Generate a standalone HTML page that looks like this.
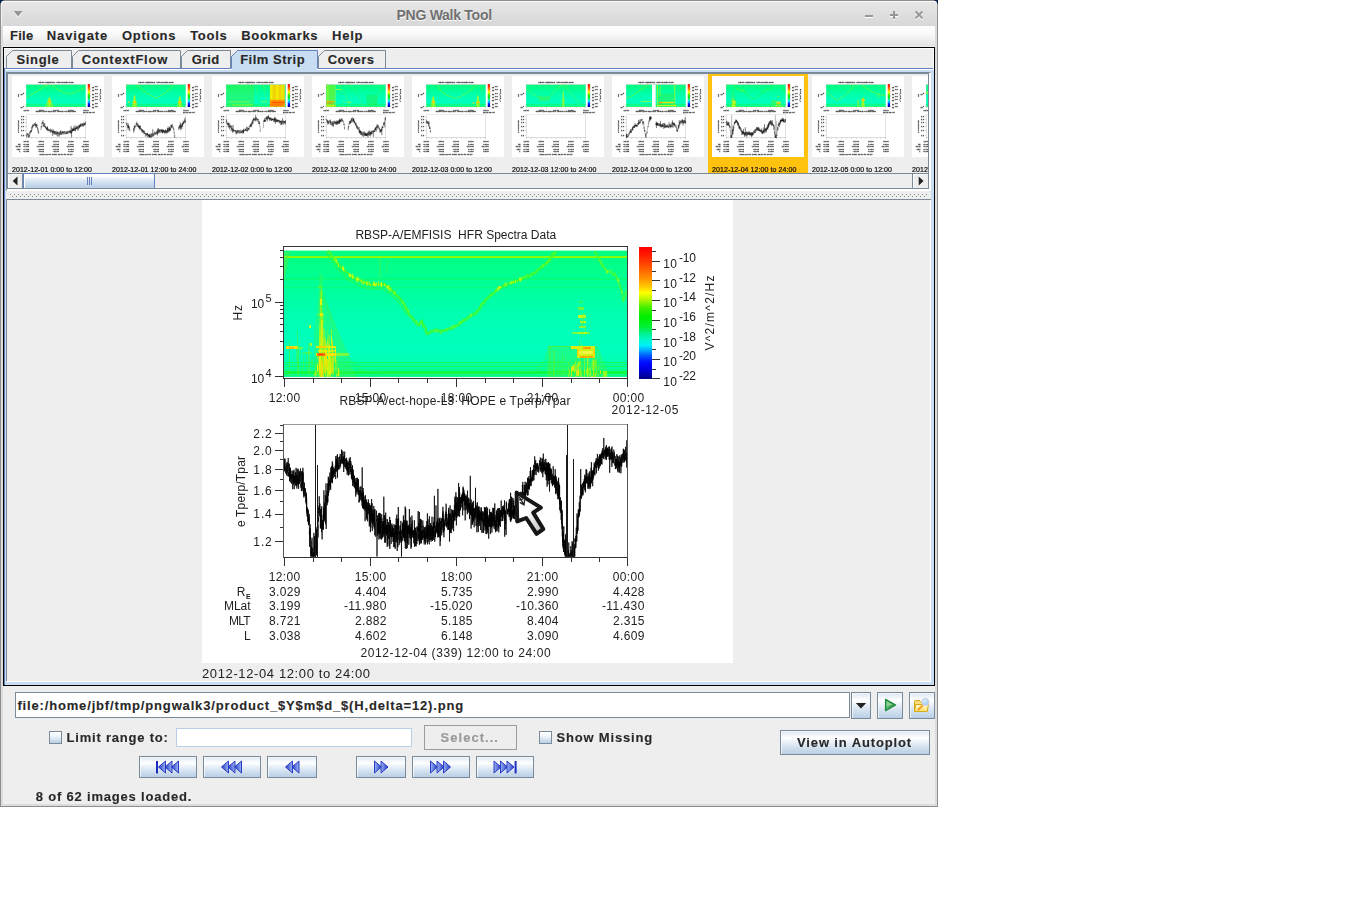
<!DOCTYPE html>
<html><head><meta charset="utf-8"><title>PNG Walk Tool</title>
<style>
html,body{margin:0;padding:0;background:#fff;}
body{width:1345px;height:916px;position:relative;overflow:hidden;font-family:"Liberation Sans",sans-serif;}
.a{position:absolute;box-sizing:border-box;}
.t{position:absolute;white-space:pre;line-height:20px;height:20px;font-family:"Liberation Sans",sans-serif;}
svg{position:absolute;overflow:visible;}
svg text{font-family:"Liberation Sans",sans-serif;}

</style></head><body>
<div class="a" style="left:0px;top:0px;width:938px;height:807px;background:#eeeeee;"></div>
<div class="a" style="left:0px;top:0px;width:938px;height:807px;border:1px solid #8e8e8e;"></div>
<div class="a" style="left:1px;top:1px;width:936px;height:805px;border:2px solid #dcdcdc;border-top:none;"></div>
<div class="a" style="left:1px;top:1px;width:936px;height:1px;background:#fbfbfb;"></div>
<div class="a" style="left:1px;top:2px;width:936px;height:24px;background:linear-gradient(#e7e7e7,#d7d7d7);"></div>
<div class="a" style="left:1px;top:3px;width:1px;height:23px;background:#f2f2f2;"></div>
<span class="t" style="left:396.50px;top:5.15px;font-size:14px;color:#707070;font-weight:bold;-webkit-text-stroke:0.12px #707070;letter-spacing:-0.268px;text-shadow:0 1px 0 #fff;-webkit-text-stroke:0;">PNG Walk Tool</span>
<svg style="left:0;top:0" width="938" height="26" viewBox="0 0 938 26">
<g fill="#fff"><rect x="865" y="16" width="8" height="2"/><rect x="890" y="15" width="8" height="2"/><rect x="893" y="12" width="2" height="8"/>
<path d="M914.80 13.05 L916.15 11.70 L919.00 14.55 L921.85 11.70 L923.20 13.05 L920.35 15.90 L923.20 18.75 L921.85 20.10 L919.00 17.25 L916.15 20.10 L914.80 18.75 L917.65 15.90 Z"/>
<path d="M13.6 12 L22.6 12 L18.1 17.4 Z"/></g>
<g fill="#969696"><rect x="865" y="15" width="8" height="2"/><rect x="890" y="14" width="8" height="2"/><rect x="893" y="11" width="2" height="8"/>
<path d="M914.80 12.05 L916.15 10.70 L919.00 13.55 L921.85 10.70 L923.20 12.05 L920.35 14.90 L923.20 17.75 L921.85 19.10 L919.00 16.25 L916.15 19.10 L914.80 17.75 L917.65 14.90 Z"/>
<path d="M13.6 11 L22.6 11 L18.1 16.4 Z"/></g>
<path d="M0 0 H4.4 Q1 1 0 4.4 Z M938 0 H933.6 Q937 1 938 4.4 Z" fill="#04244a"/>
</svg>
<div class="a" style="left:3px;top:26px;width:932px;height:20px;background:linear-gradient(#ffffff 0%,#f7f7f7 45%,#e3e3e3 100%);"></div>
<div class="a" style="left:3px;top:46px;width:932px;height:1px;background:#eeeeee;"></div>
<span class="t" style="left:10.00px;top:25.50px;font-size:13px;color:#282828;font-weight:bold;-webkit-text-stroke:0.12px #282828;letter-spacing:0.251px;">File</span>
<span class="t" style="left:46.80px;top:25.50px;font-size:13px;color:#282828;font-weight:bold;-webkit-text-stroke:0.12px #282828;letter-spacing:0.889px;">Navigate</span>
<span class="t" style="left:122.00px;top:25.50px;font-size:13px;color:#282828;font-weight:bold;-webkit-text-stroke:0.12px #282828;letter-spacing:0.728px;">Options</span>
<span class="t" style="left:190.20px;top:25.50px;font-size:13px;color:#282828;font-weight:bold;-webkit-text-stroke:0.12px #282828;letter-spacing:0.700px;">Tools</span>
<span class="t" style="left:241.30px;top:25.50px;font-size:13px;color:#282828;font-weight:bold;-webkit-text-stroke:0.12px #282828;letter-spacing:0.677px;">Bookmarks</span>
<span class="t" style="left:332.10px;top:25.50px;font-size:13px;color:#282828;font-weight:bold;-webkit-text-stroke:0.12px #282828;letter-spacing:0.732px;">Help</span>
<div class="a" style="left:3px;top:47px;width:932px;height:639px;border:1px solid #000;background:#eeeeee;"></div>
<div class="a" style="left:4px;top:48px;width:930px;height:1px;background:#fff;"></div>
<div class="a" style="left:933px;top:48px;width:1px;height:20px;background:#fff;"></div>
<div class="a" style="left:4px;top:68px;width:929px;height:1px;background:#6382bf;"></div>
<div class="a" style="left:4px;top:69px;width:1px;height:616px;background:#6382bf;"></div>
<div class="a" style="left:5px;top:69px;width:928px;height:1px;background:#fff;"></div>
<div class="a" style="left:5px;top:70px;width:929px;height:2px;background:#c8ddf2;"></div>
<div class="a" style="left:5px;top:70px;width:1px;height:615px;background:#c8ddf2;"></div>
<div class="a" style="left:931px;top:70px;width:3px;height:615px;background:#c8ddf2;"></div>
<div class="a" style="left:5px;top:682px;width:929px;height:3px;background:#c8ddf2;"></div>
<svg style="left:0;top:0" width="938" height="80" viewBox="0 0 938 80" shape-rendering="crispEdges"><path d="M6.5 68 L6.5 56.5 L12.5 50.5 L71.5 50.5 L71.5 68" fill="none" stroke="#7a8a99" shape-rendering="auto"/><path d="M72.5 68 L72.5 56.5 L78.5 50.5 L180.5 50.5 L180.5 68" fill="none" stroke="#7a8a99" shape-rendering="auto"/><path d="M181.5 68 L181.5 56.5 L187.5 50.5 L230.5 50.5 L230.5 68" fill="none" stroke="#7a8a99" shape-rendering="auto"/><path d="M231 69 L231 56 L237 50 L318 50 L318 69 Z" fill="#c8ddf2"/><path d="M231.5 68.5 L231.5 56.5 L237.5 50.5 L317.5 50.5 L317.5 68.5" fill="none" stroke="#6382bf" shape-rendering="auto"/><path d="M318.5 68 L318.5 56.5 L324.5 50.5 L385.5 50.5 L385.5 68" fill="none" stroke="#7a8a99" shape-rendering="auto"/></svg>
<div class="a" style="left:232px;top:68px;width:85px;height:2px;background:#c8ddf2;"></div>
<span class="t" style="left:16.40px;top:49.50px;font-size:13px;color:#282828;font-weight:bold;-webkit-text-stroke:0.12px #282828;letter-spacing:0.682px;">Single</span>
<span class="t" style="left:81.80px;top:49.50px;font-size:13px;color:#282828;font-weight:bold;-webkit-text-stroke:0.12px #282828;letter-spacing:0.746px;">ContextFlow</span>
<span class="t" style="left:191.80px;top:49.50px;font-size:13px;color:#282828;font-weight:bold;-webkit-text-stroke:0.12px #282828;letter-spacing:0.194px;">Grid</span>
<span class="t" style="left:240.20px;top:49.50px;font-size:13px;color:#282828;font-weight:bold;-webkit-text-stroke:0.12px #282828;letter-spacing:0.495px;">Film Strip</span>
<span class="t" style="left:327.70px;top:49.50px;font-size:13px;color:#282828;font-weight:bold;-webkit-text-stroke:0.12px #282828;letter-spacing:0.420px;">Covers</span>
<div class="a" style="left:6px;top:72px;width:925px;height:119px;border-top:1px solid #7a8a99;border-left:1px solid #7a8a99;border-right:1px solid #fff;border-bottom:1px solid #fff;"></div>
<div class="a" style="left:7px;top:73px;width:923px;height:117px;border-right:1px solid #fff;border-bottom:1px solid #fff;"></div>
<div class="a" style="left:7px;top:73px;width:922px;height:116px;border:1px solid #7a8a99;background:#eeeeee;"></div>
<div class="a" style="left:8px;top:74px;width:920px;height:99px;overflow:hidden;background:#eeeeee;will-change:transform;"><div class="a" style="left:4px;top:2px;width:92px;height:81px;background:#fff;"></div><span class="t" style="left:4px;top:86.17px;font-size:7px;color:#111;-webkit-text-stroke:.22px #111;letter-spacing:0.057px;">2012-12-01 0:00 to 12:00</span><div class="a" style="left:104px;top:2px;width:92px;height:81px;background:#fff;"></div><span class="t" style="left:104px;top:86.17px;font-size:7px;color:#111;-webkit-text-stroke:.22px #111;letter-spacing:0.079px;">2012-12-01 12:00 to 24:00</span><div class="a" style="left:204px;top:2px;width:92px;height:81px;background:#fff;"></div><span class="t" style="left:204px;top:86.17px;font-size:7px;color:#111;-webkit-text-stroke:.22px #111;letter-spacing:0.057px;">2012-12-02 0:00 to 12:00</span><div class="a" style="left:304px;top:2px;width:92px;height:81px;background:#fff;"></div><span class="t" style="left:304px;top:86.17px;font-size:7px;color:#111;-webkit-text-stroke:.22px #111;letter-spacing:0.079px;">2012-12-02 12:00 to 24:00</span><div class="a" style="left:404px;top:2px;width:92px;height:81px;background:#fff;"></div><span class="t" style="left:404px;top:86.17px;font-size:7px;color:#111;-webkit-text-stroke:.22px #111;letter-spacing:0.057px;">2012-12-03 0:00 to 12:00</span><div class="a" style="left:504px;top:2px;width:92px;height:81px;background:#fff;"></div><span class="t" style="left:504px;top:86.17px;font-size:7px;color:#111;-webkit-text-stroke:.22px #111;letter-spacing:0.079px;">2012-12-03 12:00 to 24:00</span><div class="a" style="left:604px;top:2px;width:92px;height:81px;background:#fff;"></div><span class="t" style="left:604px;top:86.17px;font-size:7px;color:#111;-webkit-text-stroke:.22px #111;letter-spacing:0.057px;">2012-12-04 0:00 to 12:00</span><div class="a" style="left:700px;top:0;width:100px;height:99px;background:#ffc20e;"></div><div class="a" style="left:704px;top:2px;width:92px;height:81px;background:#fff;"></div><span class="t" style="left:704px;top:86.17px;font-size:7px;color:#111;-webkit-text-stroke:.22px #111;letter-spacing:0.079px;">2012-12-04 12:00 to 24:00</span><div class="a" style="left:804px;top:2px;width:92px;height:81px;background:#fff;"></div><span class="t" style="left:804px;top:86.17px;font-size:7px;color:#111;-webkit-text-stroke:.22px #111;letter-spacing:0.057px;">2012-12-05 0:00 to 12:00</span><div class="a" style="left:904px;top:2px;width:92px;height:81px;background:#fff;"></div><span class="t" style="left:904px;top:86.17px;font-size:7px;color:#111;-webkit-text-stroke:.22px #111;letter-spacing:0.079px;">2012-12-05 12:00 to 24:00</span></div>
<div class="a" style="left:8px;top:173px;width:920px;height:16px;background:#eeeeee;"></div>
<div class="a" style="left:8px;top:173px;width:920px;height:1px;background:#7a8a99;"></div>
<div class="a" style="left:8px;top:188px;width:920px;height:1px;background:#7a8a99;"></div>
<div class="a" style="left:8px;top:174px;width:15px;height:14px;border-top:1px solid #fff;border-left:1px solid #fff;"></div>
<div class="a" style="left:22px;top:174px;width:1px;height:14px;background:#7a8a99;"></div>
<div class="a" style="left:23px;top:173px;width:132px;height:16px;border:1px solid #6382bf;border-bottom-color:#7a8a99;background:linear-gradient(#ffffff 0%,#ffffff 15%,#dde8f3 45%,#c4d8ed 80%,#b8cfe5 100%);"></div>
<div class="a" style="left:24px;top:174px;width:130px;height:1px;background:#fff;"></div>
<div class="a" style="left:24px;top:174px;width:1px;height:14px;background:#fff;"></div>
<div class="a" style="left:87px;top:177px;width:1px;height:8px;background:#6382bf;"></div>
<div class="a" style="left:89px;top:177px;width:1px;height:8px;background:#6382bf;"></div>
<div class="a" style="left:91px;top:177px;width:1px;height:8px;background:#6382bf;"></div>
<div class="a" style="left:912px;top:174px;width:1px;height:14px;background:#7a8a99;"></div>
<div class="a" style="left:913px;top:174px;width:15px;height:14px;border-top:1px solid #fff;border-left:1px solid #fff;"></div>
<svg style="left:0;top:170px" width="938" height="20" viewBox="0 170 938 20"><path d="M17.5 176.5 L17.5 185.5 L12.7 181 Z M918.7 176.5 L918.7 185.5 L923.5 181 Z" fill="#222"/></svg>
<svg style="left:8px;top:193px" width="920" height="5" viewBox="8 193 920 5" shape-rendering="crispEdges"><defs><pattern id="dp" x="0" y="194" width="4" height="4" patternUnits="userSpaceOnUse"><rect x="2" y="0" width="1" height="1" fill="#7d8c9b"/><rect x="0" y="2" width="1" height="1" fill="#7d8c9b"/></pattern></defs><rect x="10" y="194" width="917" height="4" fill="url(#dp)"/></svg>
<div class="a" style="left:6px;top:199px;width:925px;height:1px;background:#7a8a99;"></div>
<div class="a" style="left:6px;top:199px;width:1px;height:482px;background:#7a8a99;"></div>
<div class="a" style="left:7px;top:681px;width:924px;height:1px;background:#fff;"></div>
<div class="a" style="left:930px;top:200px;width:1px;height:482px;background:#fff;"></div>
<svg style="left:0;top:0;will-change:transform" width="1345" height="916" viewBox="0 0 1345 916">
<defs>
<linearGradient id="cb" x1="0" y1="0" x2="0" y2="1">
<stop offset="0" stop-color="#ff0000"/>
<stop offset="0.04" stop-color="#ff1000"/>
<stop offset="0.11" stop-color="#ff3800"/>
<stop offset="0.235" stop-color="#ff9000"/>
<stop offset="0.3" stop-color="#ffc800"/>
<stop offset="0.346" stop-color="#ffff00"/>
<stop offset="0.395" stop-color="#b8f800"/>
<stop offset="0.46" stop-color="#40f000"/>
<stop offset="0.53" stop-color="#00ee00"/>
<stop offset="0.6" stop-color="#00f030"/>
<stop offset="0.656" stop-color="#00f090"/>
<stop offset="0.7" stop-color="#00f8c8"/>
<stop offset="0.745" stop-color="#00f0f8"/>
<stop offset="0.78" stop-color="#00b0ff"/>
<stop offset="0.82" stop-color="#0060ff"/>
<stop offset="0.87" stop-color="#0010ff"/>
<stop offset="0.917" stop-color="#0000e8"/>
<stop offset="1" stop-color="#000088"/>
</linearGradient>
<linearGradient id="sgb" x1="0" y1="0" x2="0" y2="1">
<stop offset="0" stop-color="#02ff80"/>
<stop offset="0.22" stop-color="#00ff92"/>
<stop offset="0.34" stop-color="#00ffa0"/>
<stop offset="0.46" stop-color="#00ffac"/>
<stop offset="0.6" stop-color="#00ffb6"/>
<stop offset="0.8" stop-color="#00ffbe"/>
<stop offset="0.87" stop-color="#00ffb0"/>
<stop offset="1" stop-color="#08fc98"/>
</linearGradient>
<clipPath id="sgclip"><rect x="284" y="250.6" width="343" height="126.4"/></clipPath>
<linearGradient id="curg" x1="0" y1="0" x2="1" y2="1"><stop offset="0" stop-color="#fff"/><stop offset="0.45" stop-color="#fdfdfd"/><stop offset="1" stop-color="#b8b8b8"/></linearGradient>
<g id="pf">
<rect x="202" y="200" width="531" height="463" fill="#fff" stroke="none"/>
<rect x="639" y="247" width="13" height="132" fill="url(#cb)" stroke="none"/>
<g stroke="#333" stroke-width="1" fill="none" shape-rendering="crispEdges">
<path d="M275 376.5 H284M280 354.5 H284M280 341.5 H284M280 331.5 H284M280 324.5 H284M280 318.5 H284M280 313.5 H284M280 309.5 H284M280 305.5 H284M275 302.5 H284M280 279.5 H284M280 266.5 H284M280 257.5 H284M280 250.5 H284M284.5 378 V387M313.5 378 V383M341.5 378 V383M370.5 378 V387M398.5 378 V383M427.5 378 V383M456.5 378 V387M485.5 378 V383M513.5 378 V383M542.5 378 V387M571.5 378 V383M599.5 378 V383M627.5 378 V387M284.5 557 V566M313.5 557 V562M341.5 557 V562M370.5 557 V566M398.5 557 V562M427.5 557 V562M456.5 557 V566M485.5 557 V562M513.5 557 V562M542.5 557 V566M571.5 557 V562M599.5 557 V562M627.5 557 V566M652 261.5 H660M652 251.5 H656M652 280.5 H660M652 271.5 H656M652 300.5 H660M652 290.5 H656M652 320.5 H660M652 310.5 H656M652 339.5 H660M652 329.5 H656M652 359.5 H660M652 349.5 H656M652 378.5 H660M652 369.5 H656M275 541.5 H284M280 527.5 H284M275 514.5 H284M280 501.5 H284M275 490.5 H284M280 479.5 H284M275 469.5 H284M280 459.5 H284M275 450.5 H284M280 441.5 H284M275 433.5 H284M280 425.5 H284"/>
</g>
<g id="axl" stroke-width="1" fill="none" shape-rendering="crispEdges">
<path d="M283 246.5H628M283 378.5H628M283 557.5H628" stroke="#333"/>
<path d="M283.5 246V379M627.5 246V379" stroke="#333" opacity=".75"/>
<path d="M283.5 424V558M627.5 424V558" stroke="#555"/>
<path d="M284 424.5H627" stroke="#999"/>
</g>
<g font-size="12" fill="#222">
<text x="355.4" y="238.5" textLength="200.8" lengthAdjust="spacing" xml:space="preserve">RBSP-A/EMFISIS  HFR Spectra Data</text>
<text x="339.4" y="405" textLength="231" lengthAdjust="spacing" xml:space="preserve">RBSP-A/ect-hope-L3  HOPE e Tperp/Tpar</text>
<text x="268.7" y="401.5" textLength="31.5" lengthAdjust="spacing">12:00</text>
<text x="268.7" y="580.7" textLength="31.5" lengthAdjust="spacing">12:00</text>
<text x="354.7" y="401.5" textLength="31.5" lengthAdjust="spacing">15:00</text>
<text x="354.7" y="580.7" textLength="31.5" lengthAdjust="spacing">15:00</text>
<text x="440.7" y="401.5" textLength="31.5" lengthAdjust="spacing">18:00</text>
<text x="440.7" y="580.7" textLength="31.5" lengthAdjust="spacing">18:00</text>
<text x="526.7" y="401.5" textLength="31.5" lengthAdjust="spacing">21:00</text>
<text x="526.7" y="580.7" textLength="31.5" lengthAdjust="spacing">21:00</text>
<text x="612.7" y="401.5" textLength="31.5" lengthAdjust="spacing">00:00</text>
<text x="612.7" y="580.7" textLength="31.5" lengthAdjust="spacing">00:00</text>
<text x="611.5" y="413.5" textLength="67" lengthAdjust="spacing">2012-12-05</text>
<text x="251" y="307.5" textLength="13.2" lengthAdjust="spacing">10</text>
<text x="265.5" y="301.5" textLength="6.6" lengthAdjust="spacing" font-size="11">5</text>
<text x="251" y="382.5" textLength="13.2" lengthAdjust="spacing">10</text>
<text x="265.5" y="376.5" textLength="6.6" lengthAdjust="spacing" font-size="11">4</text>
<text x="663.3" y="268.3" textLength="13.6" lengthAdjust="spacing">10</text>
<text x="678.9" y="262.3" textLength="17.1" lengthAdjust="spacing">-10</text>
<text x="663.3" y="287.88" textLength="13.6" lengthAdjust="spacing">10</text>
<text x="678.9" y="281.88" textLength="17.1" lengthAdjust="spacing">-12</text>
<text x="663.3" y="307.46" textLength="13.6" lengthAdjust="spacing">10</text>
<text x="678.9" y="301.46" textLength="17.1" lengthAdjust="spacing">-14</text>
<text x="663.3" y="327.04" textLength="13.6" lengthAdjust="spacing">10</text>
<text x="678.9" y="321.04" textLength="17.1" lengthAdjust="spacing">-16</text>
<text x="663.3" y="346.62" textLength="13.6" lengthAdjust="spacing">10</text>
<text x="678.9" y="340.62" textLength="17.1" lengthAdjust="spacing">-18</text>
<text x="663.3" y="366.2" textLength="13.6" lengthAdjust="spacing">10</text>
<text x="678.9" y="360.2" textLength="17.1" lengthAdjust="spacing">-20</text>
<text x="663.3" y="385.78" textLength="13.6" lengthAdjust="spacing">10</text>
<text x="678.9" y="379.78" textLength="17.1" lengthAdjust="spacing">-22</text>
<text transform="translate(714,350.5) rotate(-90)" textLength="75" lengthAdjust="spacing">V^2/m^2/Hz</text>
<text transform="translate(241.5,320.5) rotate(-90)" textLength="15.5" lengthAdjust="spacing">Hz</text>
<text transform="translate(245,527) rotate(-90)" textLength="71" lengthAdjust="spacing">e Tperp/Tpar</text>
<text x="253.3" y="545.8" textLength="18.5" lengthAdjust="spacing">1.2</text>
<text x="253.3" y="518.407" textLength="18.5" lengthAdjust="spacing">1.4</text>
<text x="253.3" y="494.679" textLength="18.5" lengthAdjust="spacing">1.6</text>
<text x="253.3" y="473.749" textLength="18.5" lengthAdjust="spacing">1.8</text>
<text x="253.3" y="455.026" textLength="18.5" lengthAdjust="spacing">2.0</text>
<text x="253.3" y="438.09" textLength="18.5" lengthAdjust="spacing">2.2</text>
<text x="268.9" y="595.6" textLength="31.5" lengthAdjust="spacing">3.029</text>
<text x="354.9" y="595.6" textLength="31.5" lengthAdjust="spacing">4.404</text>
<text x="440.9" y="595.6" textLength="31.5" lengthAdjust="spacing">5.735</text>
<text x="526.9" y="595.6" textLength="31.5" lengthAdjust="spacing">2.990</text>
<text x="612.9" y="595.6" textLength="31.5" lengthAdjust="spacing">4.428</text>
<text x="268.9" y="610" textLength="31.5" lengthAdjust="spacing">3.199</text>
<text x="343.9" y="610" textLength="42.5" lengthAdjust="spacing">-11.980</text>
<text x="429.9" y="610" textLength="42.5" lengthAdjust="spacing">-15.020</text>
<text x="515.9" y="610" textLength="42.5" lengthAdjust="spacing">-10.360</text>
<text x="601.9" y="610" textLength="42.5" lengthAdjust="spacing">-11.430</text>
<text x="268.9" y="624.8" textLength="31.5" lengthAdjust="spacing">8.721</text>
<text x="354.9" y="624.8" textLength="31.5" lengthAdjust="spacing">2.882</text>
<text x="440.9" y="624.8" textLength="31.5" lengthAdjust="spacing">5.185</text>
<text x="526.9" y="624.8" textLength="31.5" lengthAdjust="spacing">8.404</text>
<text x="612.9" y="624.8" textLength="31.5" lengthAdjust="spacing">2.315</text>
<text x="268.9" y="639.6" textLength="31.5" lengthAdjust="spacing">3.038</text>
<text x="354.9" y="639.6" textLength="31.5" lengthAdjust="spacing">4.602</text>
<text x="440.9" y="639.6" textLength="31.5" lengthAdjust="spacing">6.148</text>
<text x="526.9" y="639.6" textLength="31.5" lengthAdjust="spacing">3.090</text>
<text x="612.9" y="639.6" textLength="31.5" lengthAdjust="spacing">4.609</text>
<text x="236.8" y="595.6" textLength="8.6" lengthAdjust="spacing">R</text>
<text x="246" y="598.5" textLength="4.6" lengthAdjust="spacing" font-size="7" font-weight="bold">E</text>
<text x="224" y="610" textLength="26.6" lengthAdjust="spacing">MLat</text>
<text x="229" y="624.8" textLength="21.6" lengthAdjust="spacing">MLT</text>
<text x="244" y="639.6" textLength="6.4" lengthAdjust="spacing">L</text>
<text x="360.6" y="657" textLength="190" lengthAdjust="spacing">2012-12-04 (339) 12:00 to 24:00</text>
</g>
</g>
<g id="sgbase">
<rect x="284" y="250.6" width="343" height="126.4" fill="url(#sgb)"/>
<g shape-rendering="crispEdges">
<rect x="284" y="256" width="343" height="2" fill="#86fc0a"/>
<rect x="284" y="278" width="343" height="2" fill="#08fc68" opacity=".6"/>
<rect x="284" y="287" width="343" height="1" fill="#0cfc5c" opacity=".45"/>
<rect x="284" y="361.5" width="343" height="1" fill="#14fa50" opacity="0.85"/>
<rect x="284" y="364" width="343" height="1" fill="#14fa58" opacity="0.5"/>
<rect x="284" y="366" width="343" height="1.2" fill="#14fa50" opacity="0.9"/>
<rect x="284" y="369" width="343" height="1" fill="#14fa58" opacity="0.5"/>
<rect x="284" y="371" width="343" height="3.2" fill="#10f840" opacity="1"/>
<rect x="284" y="375.4" width="343" height="1" fill="#14fa50" opacity="0.6"/>
</g></g>
</defs>
<defs>
<filter id="bl" x="-5%" y="-5%" width="110%" height="110%"><feGaussianBlur stdDeviation="0.55"/></filter>
<g id="sgmain"><use href="#sgbase"/><g filter="url(#bl)" clip-path="url(#sgclip)">
<path d="M321 286 L334 322 L348 358 L357 377 L314 377 L314 335 L318 300 Z" fill="#38f850" opacity=".4"/>
<path d="M548 346 L598 346 L603 360 L610 377 L546 377 Z" fill="#38f850" opacity=".42"/>
<path d="M284 252 L290 252 L286 272 L284 280 Z" fill="#50f040" opacity=".5"/>
<polyline points="322,292 335,326 350,360 362,371 400,373.5 500,373.5 536,371 545,360 549,347" fill="none" stroke="#30f858" stroke-width="1.3" opacity=".5"/>
<polyline points="327.0,251.5 329.0,252.0 333.0,257.0 337.0,263.0 342.0,268.5 347.0,273.7 355.0,278.6 362.0,282.0 368.3,284.3 376.0,284.8 383.0,284.3 388.0,287.5 392.9,291.7 401.0,299.9 405.0,306.0 409.2,314.6 414.0,320.0 418.2,325.3 421.5,321.0 424.0,327.0 427.2,334.3 431.0,331.5 435.4,330.0 441.0,331.0 446.9,330.2 452.0,328.0 458.4,324.5 463.0,321.0 470.0,316.3 476.2,313.0 480.0,308.0 484.4,301.5 491.0,295.0 499.1,288.4 508.0,284.0 518.8,280.2 526.0,277.0 533.5,273.7 541.7,267.1 546.0,263.0 549.9,258.9 553.0,255.0 556.5,251.6" fill="none" stroke="#20fc40" stroke-width="3.6" opacity=".45" stroke-linejoin="round"/>
<polyline points="327.0,250.9 328.2,251.2 329.4,252.8 330.6,252.9 331.8,255.4 333.0,255.9 334.2,259.4 335.4,260.7 336.6,263.1 337.8,263.6 339.0,265.4 340.2,266.4 341.4,267.5 342.6,269.2 343.8,269.7 345.0,271.4 346.2,273.2 347.4,274.0 348.6,274.5 349.8,276.5 351.0,276.2 352.2,276.6 353.4,277.7 354.6,278.1 355.8,278.8 357.0,279.4 358.2,281.2 359.4,280.7 360.6,281.4 361.8,282.2 363.0,283.4 364.2,282.7 365.4,282.9 366.6,284.9 367.8,283.4 369.0,284.2 370.2,284.8 371.4,285.6 372.6,284.1 373.8,283.4 375.0,285.1 376.2,284.5 377.4,284.5 378.6,284.8 379.8,284.6 381.0,284.6 382.2,284.1 383.4,285.2 384.6,286.1 385.8,286.1 387.0,286.6 388.2,288.0 389.4,288.9 390.6,289.2 391.8,290.5 393.0,292.3 394.2,293.0 395.4,294.1 396.6,295.6 397.8,296.6 399.0,297.9 400.2,298.1 401.4,301.4 402.6,302.4 403.8,303.7 405.0,306.5 406.2,308.6 407.4,310.9" fill="none" stroke="#30fc30" stroke-width="1.3" opacity=".6" transform="translate(-1,4)"/>
<polyline points="327.0,251.6 328.2,252.8 329.4,251.8 330.6,254.8 331.8,255.3 333.0,256.8 334.2,260.3 335.4,260.7 336.6,262.4 337.8,264.5 339.0,266.1 340.2,266.5 341.4,268.3 342.6,268.3 343.8,270.1 345.0,271.3 346.2,271.8 347.4,272.7 348.6,273.4 349.8,275.2 351.0,276.0 352.2,276.6 353.4,277.7 354.6,277.3 355.8,278.9 357.0,279.8 358.2,280.8 359.4,280.1 360.6,281.0 361.8,280.3 363.0,282.0 364.2,281.0 365.4,282.1 366.6,284.6 367.8,282.4 369.0,285.0 370.2,284.7 371.4,284.3 372.6,284.9 373.8,285.1 375.0,285.6 376.2,284.6 377.4,284.2 378.6,284.1 379.8,283.7 381.0,284.4 382.2,283.7 383.4,285.4 384.6,283.8 385.8,285.2 387.0,286.1 388.2,286.0 389.4,290.2 390.6,287.8 391.8,290.5 393.0,291.4 394.2,294.3 395.4,292.6 396.6,296.3 397.8,296.1 399.0,297.8 400.2,298.6 401.4,301.0 402.6,301.4 403.8,304.1 405.0,306.3 406.2,309.9 407.4,309.0 408.6,314.6 409.8,316.0 411.0,316.2 412.2,318.2 413.4,319.0 414.6,322.1 415.8,322.4 417.0,323.6 418.2,325.1 419.4,323.6 420.6,322.0 421.8,321.0 423.0,326.2 424.2,325.9 425.4,327.3 426.6,332.8 427.8,333.7 429.0,333.3 430.2,331.9 431.4,331.2 432.6,331.2 433.8,331.3 435.0,329.8 436.2,329.8 437.4,331.9 438.6,331.0 439.8,330.0 441.0,332.9 442.2,331.5 443.4,330.2 444.6,329.6 445.8,330.6 447.0,329.5 448.2,328.8 449.4,328.1 450.6,328.2 451.8,329.0 453.0,327.1 454.2,325.6 455.4,326.7 456.6,325.5 457.8,325.5 459.0,325.0 460.2,323.0 461.4,322.1 462.6,321.3 463.8,319.6 465.0,320.2 466.2,319.9 467.4,318.2 468.6,317.1 469.8,316.2 471.0,315.1 472.2,314.5 473.4,314.2 474.6,313.2 475.8,312.9 477.0,310.7 478.2,310.6 479.4,308.8 480.6,306.2 481.8,303.5 483.0,303.6 484.2,302.7 485.4,299.9 486.6,298.9 487.8,297.7 489.0,297.5 490.2,295.1 491.4,295.5 492.6,293.5 493.8,293.5 495.0,291.8 496.2,290.6 497.4,288.6 498.6,288.3 499.8,287.8 501.0,288.0 502.2,287.1 503.4,285.7 504.6,286.0 505.8,285.9 507.0,284.4 508.2,283.6 509.4,283.2 510.6,283.7 511.8,283.1 513.0,281.5 514.2,282.1 515.4,281.0 516.6,280.4 517.8,281.5 519.0,280.8 520.2,279.0 521.4,279.1 522.6,278.9 523.8,277.5 525.0,277.3 526.2,277.4 527.4,275.0 528.6,276.1 529.8,275.9 531.0,275.2 532.2,273.2 533.4,274.0 534.6,272.1 535.8,272.3 537.0,271.4 538.2,270.1 539.4,268.3 540.6,267.5 541.8,267.7 543.0,265.1 544.2,265.1 545.4,264.0 546.6,262.1 547.8,263.0 549.0,259.9 550.2,260.2 551.4,255.4 552.6,253.7 553.8,255.0 555.0,253.6 556.2,251.6" fill="none" stroke="#50fc24" stroke-width="1.6" opacity=".85"/>
<polyline points="594.5,251.5 597.0,255.0 600.7,262.2 604.0,268.0 607.2,272.0 611.0,271.5 615.4,275.0 618.0,281.0 620.3,286.8 622.0,294.0 623.6,301.5 625.0,296.0 627.0,291.0" fill="none" stroke="#30fc38" stroke-width="3" opacity=".4"/>
<polyline points="594.5,251.5 595.7,253.7 596.9,254.3 598.1,257.6 599.3,260.6 600.5,262.3 601.7,265.8 602.9,265.0 604.1,268.2 605.3,268.8 606.5,270.2 607.7,271.7 608.9,272.0 610.1,272.1 611.3,272.3 612.5,275.4 613.7,274.7 614.9,272.7 616.1,276.9 617.3,278.6 618.5,281.6 619.7,286.9 620.9,289.1 622.1,292.1 623.3,300.5 624.5,297.6 625.7,292.8 626.9,290.1" fill="none" stroke="#60fc20" stroke-width="1.2" opacity=".8" stroke-dasharray="4 1 2 1"/>
<rect x="342.3" y="265.9" width="1" height="3.6" fill="#e8fc00" opacity="0.57"/><rect x="387.4" y="285.8" width="1" height="3.7" fill="#e8fc00" opacity="0.71"/><rect x="381.0" y="281.8" width="1" height="3.3" fill="#e8fc00" opacity="0.67"/><rect x="363.5" y="282.4" width="1" height="2.1" fill="#e8fc00" opacity="0.84"/><rect x="377.9" y="281.1" width="1" height="4.5" fill="#e8fc00" opacity="0.70"/><rect x="366.3" y="281.2" width="1" height="3.2" fill="#e8fc00" opacity="0.93"/><rect x="356.2" y="277.5" width="1" height="3.9" fill="#e8fc00" opacity="0.89"/><rect x="373.9" y="282.9" width="1" height="2.5" fill="#e8fc00" opacity="0.67"/><rect x="357.4" y="278.5" width="1" height="4.0" fill="#e8fc00" opacity="0.60"/><rect x="351.8" y="273.0" width="1" height="4.3" fill="#e8fc00" opacity="0.53"/><rect x="358.3" y="278.0" width="1" height="2.1" fill="#e8fc00" opacity="0.92"/><rect x="360.7" y="279.4" width="1" height="4.0" fill="#e8fc00" opacity="0.74"/><rect x="380.6" y="283.2" width="1" height="3.3" fill="#e8fc00" opacity="0.75"/><rect x="384.1" y="283.9" width="1" height="2.5" fill="#e8fc00" opacity="0.90"/><rect x="380.7" y="283.6" width="1" height="3.5" fill="#e8fc00" opacity="0.70"/><rect x="356.4" y="278.3" width="1" height="2.0" fill="#e8fc00" opacity="0.83"/><rect x="374.8" y="284.3" width="1" height="2.2" fill="#e8fc00" opacity="0.76"/><rect x="366.6" y="282.3" width="1" height="2.7" fill="#e8fc00" opacity="0.50"/><rect x="386.2" y="286.1" width="1" height="2.0" fill="#e8fc00" opacity="0.91"/><rect x="369.0" y="281.1" width="1" height="3.4" fill="#e8fc00" opacity="0.64"/><rect x="357.4" y="276.4" width="1" height="4.0" fill="#e8fc00" opacity="0.79"/><rect x="350.1" y="274.1" width="1" height="2.8" fill="#e8fc00" opacity="0.94"/><rect x="348.9" y="273.1" width="1" height="3.9" fill="#e8fc00" opacity="0.90"/><rect x="351.9" y="276.4" width="1" height="2.0" fill="#e8fc00" opacity="0.57"/><rect x="370.1" y="283.8" width="1" height="2.7" fill="#e8fc00" opacity="0.58"/><rect x="343.1" y="267.1" width="1" height="4.1" fill="#e8fc00" opacity="0.78"/><rect x="363.1" y="281.1" width="1" height="2.1" fill="#e8fc00" opacity="0.60"/><rect x="351.8" y="275.2" width="1" height="3.5" fill="#e8fc00" opacity="0.52"/><rect x="367.4" y="284.0" width="1" height="1.7" fill="#e8fc00" opacity="0.57"/><rect x="388.4" y="285.5" width="1" height="4.2" fill="#e8fc00" opacity="0.88"/><rect x="362.4" y="282.0" width="1" height="2.3" fill="#e8fc00" opacity="0.64"/><rect x="349.7" y="274.8" width="1" height="1.8" fill="#e8fc00" opacity="0.70"/><rect x="378.2" y="283.7" width="1" height="2.4" fill="#e8fc00" opacity="0.57"/><rect x="380.8" y="283.3" width="1" height="3.4" fill="#e8fc00" opacity="0.77"/><rect x="343.4" y="268.1" width="1" height="2.3" fill="#e8fc00" opacity="0.73"/><rect x="352.6" y="275.6" width="1" height="2.9" fill="#e8fc00" opacity="0.94"/><rect x="351.5" y="274.0" width="1" height="1.9" fill="#e8fc00" opacity="0.59"/><rect x="373.7" y="282.9" width="1" height="3.2" fill="#e8fc00" opacity="0.83"/><rect x="374.5" y="282.6" width="1" height="2.1" fill="#e8fc00" opacity="0.89"/><rect x="375.8" y="282.4" width="1" height="3.6" fill="#e8fc00" opacity="0.82"/><rect x="342.3" y="266.5" width="1" height="3.8" fill="#e8fc00" opacity="0.87"/><rect x="373.5" y="281.8" width="1" height="4.1" fill="#e8fc00" opacity="0.75"/><rect x="389.8" y="287.8" width="1" height="4.2" fill="#e8fc00" opacity="0.59"/><rect x="387.3" y="285.1" width="1" height="2.1" fill="#e8fc00" opacity="0.74"/><rect x="373.0" y="281.5" width="1" height="4.4" fill="#e8fc00" opacity="0.53"/><rect x="381.1" y="282.8" width="1" height="3.8" fill="#e8fc00" opacity="0.70"/>
<rect x="334.2" y="257.1" width="1" height="3.2" fill="#c8fc08" opacity="0.76"/><rect x="338.0" y="263.3" width="1" height="3.5" fill="#c8fc08" opacity="0.86"/><rect x="335.7" y="258.7" width="1" height="4.0" fill="#c8fc08" opacity="0.95"/><rect x="335.7" y="260.3" width="1" height="1.7" fill="#c8fc08" opacity="0.89"/><rect x="336.4" y="261.2" width="1" height="2.0" fill="#c8fc08" opacity="0.76"/>
<rect x="519.4" y="278.3" width="1" height="2.6" fill="#d8fc04" opacity="0.56"/><rect x="495.4" y="289.8" width="1" height="1.8" fill="#d8fc04" opacity="0.45"/><rect x="496.8" y="287.4" width="1" height="2.6" fill="#d8fc04" opacity="0.45"/><rect x="510.7" y="280.8" width="1" height="3.3" fill="#d8fc04" opacity="0.70"/><rect x="515.1" y="280.1" width="1" height="3.0" fill="#d8fc04" opacity="0.82"/><rect x="521.9" y="276.6" width="1" height="2.1" fill="#d8fc04" opacity="0.53"/><rect x="498.4" y="287.7" width="1" height="3.3" fill="#d8fc04" opacity="0.43"/><rect x="497.0" y="290.0" width="1" height="1.7" fill="#d8fc04" opacity="0.44"/><rect x="518.9" y="278.5" width="1" height="1.5" fill="#d8fc04" opacity="0.66"/><rect x="497.7" y="287.9" width="1" height="2.2" fill="#d8fc04" opacity="0.77"/><rect x="520.3" y="279.2" width="1" height="2.5" fill="#d8fc04" opacity="0.82"/><rect x="512.6" y="280.8" width="1" height="2.8" fill="#d8fc04" opacity="0.70"/><rect x="519.4" y="277.3" width="1" height="3.3" fill="#d8fc04" opacity="0.78"/><rect x="510.3" y="281.9" width="1" height="2.1" fill="#d8fc04" opacity="0.83"/><rect x="504.6" y="282.5" width="1" height="3.5" fill="#d8fc04" opacity="0.68"/><rect x="505.4" y="282.5" width="1" height="2.3" fill="#d8fc04" opacity="0.83"/><rect x="520.3" y="277.2" width="1" height="2.1" fill="#d8fc04" opacity="0.84"/><rect x="513.0" y="281.2" width="1" height="1.8" fill="#d8fc04" opacity="0.68"/>
<rect x="446.7" y="328.0" width="1" height="1.9" fill="#c0fc08" opacity="0.50"/><rect x="393.7" y="290.7" width="1" height="2.9" fill="#c0fc08" opacity="0.50"/><rect x="475.4" y="313.6" width="1" height="1.5" fill="#c0fc08" opacity="0.35"/><rect x="435.6" y="329.8" width="1" height="2.2" fill="#c0fc08" opacity="0.63"/><rect x="459.2" y="321.3" width="1" height="2.2" fill="#c0fc08" opacity="0.58"/><rect x="408.0" y="309.6" width="1" height="2.5" fill="#c0fc08" opacity="0.46"/><rect x="461.1" y="320.8" width="1" height="1.6" fill="#c0fc08" opacity="0.48"/><rect x="470.7" y="314.1" width="1" height="2.3" fill="#c0fc08" opacity="0.62"/><rect x="419.7" y="323.2" width="1" height="1.6" fill="#c0fc08" opacity="0.51"/><rect x="416.2" y="320.1" width="1" height="2.8" fill="#c0fc08" opacity="0.41"/><rect x="470.0" y="314.5" width="1" height="2.9" fill="#c0fc08" opacity="0.66"/><rect x="393.6" y="292.1" width="1" height="2.3" fill="#c0fc08" opacity="0.60"/><rect x="402.5" y="301.2" width="1" height="2.6" fill="#c0fc08" opacity="0.69"/><rect x="451.6" y="325.5" width="1" height="2.5" fill="#c0fc08" opacity="0.58"/><rect x="405.0" y="305.7" width="1" height="1.6" fill="#c0fc08" opacity="0.56"/><rect x="454.2" y="326.8" width="1" height="1.8" fill="#c0fc08" opacity="0.43"/>
<rect x="548.3" y="258.8" width="1" height="3.0" fill="#b0fc10" opacity="0.54"/><rect x="553.9" y="251.7" width="1" height="2.2" fill="#b0fc10" opacity="0.40"/><rect x="524.4" y="275.4" width="1" height="1.9" fill="#b0fc10" opacity="0.42"/><rect x="542.2" y="265.5" width="1" height="1.8" fill="#b0fc10" opacity="0.58"/><rect x="535.5" y="271.4" width="1" height="2.1" fill="#b0fc10" opacity="0.40"/><rect x="529.9" y="274.9" width="1" height="2.4" fill="#b0fc10" opacity="0.56"/><rect x="543.1" y="264.7" width="1" height="1.7" fill="#b0fc10" opacity="0.61"/><rect x="545.9" y="262.7" width="1" height="2.2" fill="#b0fc10" opacity="0.36"/>
<rect x="606.9" y="271.1" width="1" height="2.5" fill="#c8fc08" opacity="0.48"/><rect x="617.6" y="278.9" width="1" height="3.2" fill="#c8fc08" opacity="0.41"/><rect x="607.8" y="270.1" width="1" height="2.1" fill="#c8fc08" opacity="0.54"/><rect x="604.6" y="267.7" width="1" height="1.5" fill="#c8fc08" opacity="0.63"/><rect x="621.5" y="290.6" width="1" height="2.3" fill="#c8fc08" opacity="0.68"/><rect x="606.3" y="269.8" width="1" height="3.7" fill="#c8fc08" opacity="0.72"/><rect x="610.3" y="269.2" width="1" height="1.7" fill="#c8fc08" opacity="0.58"/><rect x="617.8" y="278.0" width="1" height="4.0" fill="#c8fc08" opacity="0.64"/><rect x="600.7" y="260.1" width="1" height="4.0" fill="#c8fc08" opacity="0.52"/><rect x="618.0" y="279.9" width="1" height="2.1" fill="#c8fc08" opacity="0.72"/>
<rect x="498.5" y="286" width="2.2" height="2.4" fill="#fff000" opacity=".9"/>
<rect x="379" y="258" width="1.4" height="20" fill="#48f440" opacity=".6"/><rect x="386.5" y="260" width="1" height="14" fill="#48f440" opacity=".5"/>
<defs><linearGradient id="colg" x1="0" y1="0" x2="0" y2="1"><stop offset="0" stop-color="#40f838" stop-opacity=".4"/><stop offset=".45" stop-color="#88f822" stop-opacity=".75"/><stop offset=".72" stop-color="#d8fa0c"/><stop offset="1" stop-color="#f8e800"/></linearGradient></defs>
<rect x="319.4" y="274" width="3.2" height="103" fill="url(#colg)" opacity=".8"/>
<g shape-rendering="crispEdges">
<rect x="321.4" y="337.8" width="1.4" height="36.5" fill="#80f820" opacity="0.53"/><rect x="319.0" y="348.4" width="1.0" height="16.1" fill="#a8f810" opacity="0.38"/><rect x="318.9" y="324.9" width="0.7" height="42.7" fill="#a8f810" opacity="0.56"/><rect x="320.7" y="333.1" width="1.0" height="33.2" fill="#a8f810" opacity="0.57"/><rect x="317.8" y="365.9" width="0.7" height="3.3" fill="#58f430" opacity="0.62"/><rect x="321.5" y="327.0" width="1.0" height="12.2" fill="#58f430" opacity="0.52"/><rect x="320.7" y="354.0" width="0.7" height="8.6" fill="#a8f810" opacity="0.60"/><rect x="319.6" y="326.0" width="0.7" height="16.9" fill="#58f430" opacity="0.49"/><rect x="320.2" y="366.9" width="0.7" height="9.8" fill="#a8f810" opacity="0.42"/><rect x="317.5" y="372.2" width="1.4" height="3.7" fill="#a8f810" opacity="0.50"/><rect x="319.1" y="346.8" width="0.7" height="21.4" fill="#80f820" opacity="0.46"/><rect x="320.7" y="289.9" width="1.0" height="80.6" fill="#58f430" opacity="0.60"/><rect x="320.9" y="288.9" width="1.0" height="44.4" fill="#a8f810" opacity="0.51"/><rect x="322.1" y="313.8" width="1.4" height="10.9" fill="#a8f810" opacity="0.39"/><rect x="319.4" y="335.2" width="1.0" height="13.5" fill="#a8f810" opacity="0.70"/><rect x="320.0" y="290.9" width="0.7" height="85.8" fill="#a8f810" opacity="0.36"/>
<rect x="330.7" y="356.3" width="1.4" height="14.8" fill="#e8fc00" opacity="0.31"/><rect x="322.2" y="351.7" width="1.0" height="21.1" fill="#ffd800" opacity="0.61"/><rect x="317.3" y="364.2" width="1.0" height="7.3" fill="#e8fc00" opacity="0.80"/><rect x="330.7" y="333.0" width="1.0" height="6.1" fill="#ffd800" opacity="0.67"/><rect x="314.5" y="369.5" width="1.0" height="7.1" fill="#ffd800" opacity="0.35"/><rect x="342.1" y="376.5" width="1.0" height="0.5" fill="#90f820" opacity="0.60"/><rect x="328.9" y="372.7" width="1.0" height="4.3" fill="#b8fa10" opacity="0.58"/><rect x="328.4" y="335.0" width="1.4" height="29.1" fill="#90f820" opacity="0.64"/><rect x="330.5" y="359.2" width="1.0" height="4.2" fill="#e8fc00" opacity="0.50"/><rect x="331.0" y="351.1" width="1.0" height="18.4" fill="#b8fa10" opacity="0.43"/><rect x="327.2" y="351.1" width="1.0" height="21.5" fill="#70f628" opacity="0.32"/><rect x="324.9" y="370.5" width="1.4" height="4.8" fill="#e8fc00" opacity="0.32"/><rect x="328.8" y="342.8" width="1.0" height="26.5" fill="#e8fc00" opacity="0.34"/><rect x="325.8" y="346.6" width="0.7" height="16.7" fill="#70f628" opacity="0.58"/><rect x="323.6" y="351.3" width="1.4" height="13.3" fill="#ffd800" opacity="0.43"/><rect x="325.8" y="376.6" width="1.0" height="0.4" fill="#e8fc00" opacity="0.72"/><rect x="328.8" y="343.7" width="1.0" height="31.7" fill="#ffe800" opacity="0.43"/><rect x="322.9" y="327.8" width="1.0" height="31.6" fill="#ffe800" opacity="0.31"/><rect x="332.7" y="349.1" width="0.7" height="23.7" fill="#ffd800" opacity="0.43"/><rect x="326.4" y="358.6" width="1.4" height="12.7" fill="#ffe800" opacity="0.79"/><rect x="323.8" y="340.3" width="1.0" height="32.4" fill="#ffe800" opacity="0.82"/><rect x="331.8" y="358.1" width="1.0" height="14.2" fill="#e8fc00" opacity="0.59"/><rect x="322.0" y="330.2" width="1.0" height="4.2" fill="#70f628" opacity="0.53"/><rect x="325.9" y="344.8" width="1.0" height="31.6" fill="#70f628" opacity="0.72"/><rect x="329.0" y="353.7" width="1.0" height="21.3" fill="#e8fc00" opacity="0.84"/><rect x="323.9" y="363.2" width="1.0" height="4.7" fill="#ffd800" opacity="0.80"/><rect x="339.0" y="369.5" width="1.0" height="7.1" fill="#70f628" opacity="0.73"/><rect x="318.5" y="351.9" width="1.0" height="10.8" fill="#ffe800" opacity="0.81"/><rect x="328.2" y="365.3" width="1.0" height="8.4" fill="#b8fa10" opacity="0.59"/><rect x="324.0" y="365.8" width="1.0" height="5.0" fill="#90f820" opacity="0.48"/><rect x="317.0" y="365.1" width="1.0" height="3.8" fill="#ffe800" opacity="0.68"/><rect x="331.7" y="368.1" width="1.0" height="8.5" fill="#ffe800" opacity="0.32"/><rect x="325.7" y="356.9" width="1.0" height="6.1" fill="#ffd800" opacity="0.55"/><rect x="314.2" y="372.8" width="1.0" height="3.3" fill="#ffe800" opacity="0.45"/><rect x="325.9" y="342.6" width="1.0" height="9.9" fill="#e8fc00" opacity="0.39"/><rect x="329.5" y="355.8" width="1.4" height="18.3" fill="#e8fc00" opacity="0.55"/><rect x="337.4" y="371.7" width="1.4" height="3.5" fill="#70f628" opacity="0.59"/><rect x="316.9" y="354.7" width="1.0" height="5.1" fill="#70f628" opacity="0.49"/><rect x="321.9" y="367.0" width="1.0" height="6.5" fill="#ffe800" opacity="0.39"/><rect x="334.1" y="356.4" width="0.7" height="5.4" fill="#90f820" opacity="0.54"/><rect x="325.1" y="351.2" width="1.4" height="17.3" fill="#ffe800" opacity="0.75"/><rect x="330.2" y="369.2" width="0.7" height="3.7" fill="#ffe800" opacity="0.76"/><rect x="334.5" y="362.0" width="1.0" height="7.9" fill="#70f628" opacity="0.49"/><rect x="326.8" y="368.4" width="1.0" height="8.2" fill="#e8fc00" opacity="0.73"/><rect x="314.9" y="371.0" width="1.0" height="3.8" fill="#b8fa10" opacity="0.84"/><rect x="335.8" y="373.9" width="1.0" height="3.1" fill="#ffe800" opacity="0.71"/><rect x="328.7" y="371.9" width="1.0" height="3.1" fill="#e8fc00" opacity="0.39"/><rect x="321.2" y="366.4" width="1.0" height="4.5" fill="#e8fc00" opacity="0.60"/><rect x="331.0" y="329.5" width="1.0" height="19.2" fill="#90f820" opacity="0.55"/><rect x="330.7" y="358.6" width="1.4" height="15.3" fill="#70f628" opacity="0.65"/><rect x="330.1" y="355.9" width="0.7" height="10.0" fill="#90f820" opacity="0.69"/><rect x="334.9" y="346.8" width="0.7" height="16.3" fill="#ffe800" opacity="0.83"/><rect x="325.0" y="365.0" width="1.0" height="6.6" fill="#70f628" opacity="0.71"/><rect x="315.5" y="371.1" width="1.4" height="3.2" fill="#b8fa10" opacity="0.35"/><rect x="321.4" y="332.8" width="0.7" height="13.3" fill="#b8fa10" opacity="0.63"/><rect x="334.9" y="361.1" width="1.0" height="11.1" fill="#90f820" opacity="0.53"/><rect x="322.4" y="359.3" width="1.0" height="6.6" fill="#b8fa10" opacity="0.82"/><rect x="336.0" y="376.5" width="1.0" height="0.5" fill="#ffe800" opacity="0.46"/><rect x="330.3" y="374.2" width="1.0" height="2.8" fill="#b8fa10" opacity="0.43"/><rect x="332.5" y="356.6" width="1.0" height="17.4" fill="#ffe800" opacity="0.63"/><rect x="338.3" y="368.3" width="1.0" height="7.6" fill="#ffe800" opacity="0.79"/><rect x="330.2" y="363.1" width="1.4" height="3.7" fill="#ffe800" opacity="0.45"/><rect x="335.6" y="360.2" width="1.0" height="12.2" fill="#90f820" opacity="0.44"/><rect x="318.2" y="353.7" width="1.4" height="17.9" fill="#ffd800" opacity="0.40"/><rect x="329.4" y="359.5" width="1.0" height="11.4" fill="#90f820" opacity="0.47"/><rect x="337.2" y="350.7" width="1.4" height="10.7" fill="#70f628" opacity="0.34"/><rect x="337.4" y="362.7" width="1.0" height="13.6" fill="#70f628" opacity="0.64"/><rect x="315.8" y="371.8" width="1.4" height="3.7" fill="#ffd800" opacity="0.32"/><rect x="327.7" y="349.4" width="0.7" height="23.5" fill="#70f628" opacity="0.78"/><rect x="326.8" y="340.4" width="1.0" height="6.0" fill="#ffe800" opacity="0.74"/><rect x="319.5" y="344.1" width="1.0" height="23.5" fill="#e8fc00" opacity="0.45"/><rect x="323.0" y="337.7" width="1.0" height="9.6" fill="#ffd800" opacity="0.55"/><rect x="323.4" y="374.7" width="1.0" height="2.3" fill="#ffe800" opacity="0.69"/><rect x="319.4" y="367.8" width="1.4" height="6.3" fill="#ffd800" opacity="0.58"/><rect x="330.2" y="364.2" width="1.4" height="10.0" fill="#ffe800" opacity="0.47"/><rect x="330.9" y="329.8" width="1.0" height="37.9" fill="#90f820" opacity="0.80"/><rect x="332.0" y="339.6" width="1.0" height="17.5" fill="#ffe800" opacity="0.44"/><rect x="317.1" y="353.5" width="1.0" height="4.0" fill="#b8fa10" opacity="0.44"/><rect x="331.7" y="343.2" width="1.4" height="20.0" fill="#70f628" opacity="0.47"/><rect x="323.0" y="335.7" width="1.0" height="35.1" fill="#90f820" opacity="0.81"/><rect x="323.7" y="358.6" width="0.7" height="5.9" fill="#e8fc00" opacity="0.74"/><rect x="327.6" y="345.9" width="1.4" height="28.5" fill="#b8fa10" opacity="0.64"/><rect x="332.4" y="341.7" width="0.7" height="30.1" fill="#ffd800" opacity="0.54"/><rect x="326.9" y="329.5" width="0.7" height="19.0" fill="#90f820" opacity="0.34"/><rect x="327.7" y="374.1" width="1.4" height="2.9" fill="#70f628" opacity="0.60"/><rect x="323.0" y="371.4" width="1.0" height="5.3" fill="#b8fa10" opacity="0.74"/><rect x="330.0" y="358.6" width="1.0" height="18.2" fill="#e8fc00" opacity="0.52"/><rect x="334.5" y="369.6" width="0.7" height="5.3" fill="#ffd800" opacity="0.78"/><rect x="323.3" y="363.7" width="0.7" height="5.9" fill="#b8fa10" opacity="0.75"/><rect x="331.2" y="337.2" width="1.0" height="5.4" fill="#e8fc00" opacity="0.73"/><rect x="319.0" y="357.5" width="1.0" height="12.0" fill="#ffe800" opacity="0.76"/><rect x="323.6" y="329.2" width="1.0" height="23.5" fill="#90f820" opacity="0.71"/>
<rect x="305.5" y="351.9" width="1.0" height="18.1" fill="#38f440" opacity="0.47"/><rect x="304.5" y="373.2" width="1.0" height="3.2" fill="#38f440" opacity="0.49"/><rect x="289.4" y="339.5" width="1.0" height="26.6" fill="#38f440" opacity="0.51"/><rect x="308.4" y="343.3" width="1.4" height="30.3" fill="#50f630" opacity="0.49"/><rect x="309.4" y="375.5" width="1.4" height="1.5" fill="#38f440" opacity="0.52"/><rect x="314.7" y="363.0" width="1.0" height="10.4" fill="#50f630" opacity="0.46"/><rect x="302.8" y="355.5" width="1.4" height="14.7" fill="#50f630" opacity="0.44"/><rect x="288.6" y="369.5" width="1.0" height="6.1" fill="#50f630" opacity="0.37"/><rect x="295.8" y="348.3" width="1.0" height="12.5" fill="#50f630" opacity="0.40"/><rect x="299.7" y="345.9" width="1.0" height="9.6" fill="#38f440" opacity="0.48"/><rect x="298.0" y="345.9" width="1.4" height="20.7" fill="#50f630" opacity="0.30"/><rect x="311.1" y="358.5" width="1.4" height="6.5" fill="#50f630" opacity="0.46"/><rect x="297.5" y="347.4" width="1.0" height="26.1" fill="#50f630" opacity="0.48"/><rect x="300.6" y="365.7" width="1.4" height="8.5" fill="#38f440" opacity="0.35"/>
<rect x="286" y="346.4" width="11.5" height="3" fill="#ffe000" opacity="0.95"/>
<rect x="288.5" y="347" width="5" height="1.8" fill="#ffb400" opacity="0.9"/>
<rect x="298" y="347" width="5" height="2" fill="#a0f818" opacity="0.6"/>
<rect x="315.5" y="346" width="20" height="2.4" fill="#f8ec00" opacity="0.85"/>
<rect x="319" y="346.4" width="6" height="1.6" fill="#ffc000" opacity="0.9"/>
<rect x="318" y="350" width="18" height="1.6" fill="#e8f800" opacity="0.7"/>
<rect x="315.5" y="353.2" width="33" height="2.6" fill="#a8f818" opacity="0.7"/>
<rect x="315.5" y="353.2" width="20" height="2.6" fill="#ffe000" opacity="0.95"/>
<rect x="316.5" y="353.4" width="9" height="2.2" fill="#ff6a00" opacity="0.95"/>
<rect x="318.5" y="353.6" width="4" height="1.8" fill="#ff3000" opacity="0.8"/>
<rect x="319.6" y="298.5" width="2.6" height="6" fill="#f0f400" opacity="0.9"/>
<rect x="320" y="312.8" width="3.4" height="3.2" fill="#f8e800" opacity="0.9"/>
<rect x="316.5" y="313.5" width="3" height="1.2" fill="#a0f818" opacity="0.7"/>
<rect x="308.5" y="325.2" width="2" height="3.2" fill="#e8f800" opacity="0.9"/>
<rect x="310" y="343.4" width="1.6" height="2.2" fill="#d0fa00" opacity="0.8"/>
<rect x="307.5" y="351" width="1.6" height="3" fill="#c0fa10" opacity="0.7"/>
<rect x="318.4" y="285.5" width="3.2" height="2.2" fill="#60f628" opacity="0.8"/>
<rect x="321" y="320" width="1.6" height="28" fill="#f0f000" opacity="0.7"/>
<rect x="324.5" y="338" width="1.4" height="39" fill="#f8e800" opacity="0.6"/>
<rect x="321" y="360" width="2.4" height="17" fill="#ffd800" opacity="0.75"/>
<rect x="328" y="345" width="1.2" height="32" fill="#e8f800" opacity="0.55"/>
<rect x="297.4" y="330" width="1" height="47" fill="#40f440" opacity="0.55"/>
<rect x="289" y="344" width="1" height="33" fill="#40f440" opacity="0.45"/>
<rect x="302" y="352" width="10" height="1.6" fill="#60f630" opacity="0.5"/>
<rect x="578.5" y="301" width="4" height="2" fill="#50f630" opacity="0.6"/>
<rect x="577.5" y="307.4" width="6.5" height="2.2" fill="#88f820" opacity="0.8"/>
<rect x="578" y="315.4" width="7.5" height="3" fill="#e0fa08" opacity="0.9"/>
<rect x="580" y="320.6" width="5.5" height="2.6" fill="#e8f800" opacity="0.85"/>
<rect x="578.5" y="326" width="7" height="2" fill="#b0f818" opacity="0.8"/>
<rect x="572" y="332" width="18" height="1.6" fill="#98f820" opacity="0.75"/>
<rect x="578" y="332" width="9" height="1.6" fill="#d0fa08" opacity="0.7"/>
<rect x="548" y="346" width="24" height="1" fill="#48f638" opacity="0.8"/>
<rect x="548.5" y="346" width="2" height="31" fill="#48f638" opacity="0.5"/>
<rect x="553" y="350" width="1.6" height="27" fill="#50f630" opacity="0.5"/>
<rect x="571" y="346" width="5.6" height="3" fill="#f8e800" opacity="0.95"/>
<rect x="577" y="346.4" width="18" height="12" fill="#f4f000" opacity="0.85"/>
<rect x="579" y="351" width="14" height="3" fill="#fff860" opacity="0.6"/>
<rect x="583" y="346.8" width="7.5" height="1.8" fill="#ff9000" opacity="0.9"/>
<rect x="580" y="356.4" width="12.5" height="1.8" fill="#ff9a00" opacity="0.85"/>
<rect x="577" y="349" width="2" height="7" fill="#ffd000" opacity="0.7"/>
<rect x="593" y="349" width="2" height="7" fill="#ffd000" opacity="0.7"/>
<rect x="603" y="371" width="3.5" height="6" fill="#c8fa10" opacity="0.7"/>
<rect x="582.8" y="313.0" width="1.0" height="10.0" fill="#80f820" opacity="0.60"/><rect x="584.8" y="327.3" width="0.7" height="5.0" fill="#58f430" opacity="0.30"/><rect x="581.4" y="343.8" width="1.0" height="2.2" fill="#58f430" opacity="0.51"/><rect x="584.9" y="325.8" width="1.4" height="11.5" fill="#80f820" opacity="0.31"/><rect x="582.0" y="321.1" width="0.7" height="4.3" fill="#80f820" opacity="0.35"/><rect x="579.2" y="339.9" width="1.0" height="6.1" fill="#80f820" opacity="0.47"/><rect x="581.9" y="321.7" width="1.4" height="5.1" fill="#58f430" opacity="0.56"/><rect x="583.3" y="316.7" width="0.7" height="5.3" fill="#58f430" opacity="0.47"/><rect x="581.3" y="330.6" width="1.4" height="6.8" fill="#58f430" opacity="0.39"/><rect x="582.0" y="344.5" width="1.4" height="1.5" fill="#80f820" opacity="0.38"/><rect x="579.5" y="340.5" width="0.7" height="5.5" fill="#80f820" opacity="0.45"/><rect x="583.6" y="330.3" width="0.7" height="5.4" fill="#80f820" opacity="0.35"/><rect x="581.3" y="313.3" width="1.0" height="13.2" fill="#80f820" opacity="0.37"/><rect x="583.9" y="313.2" width="1.0" height="4.9" fill="#80f820" opacity="0.35"/>
<rect x="569.8" y="376.4" width="1.0" height="0.6" fill="#90f820" opacity="0.65"/><rect x="597.8" y="373.0" width="1.0" height="3.8" fill="#b8fa10" opacity="0.43"/><rect x="595.5" y="358.6" width="1.4" height="5.8" fill="#70f620" opacity="0.65"/><rect x="593.2" y="358.5" width="1.4" height="12.1" fill="#ffe800" opacity="0.40"/><rect x="587.2" y="374.7" width="0.7" height="2.3" fill="#70f620" opacity="0.65"/><rect x="575.6" y="370.9" width="1.0" height="6.0" fill="#ffe800" opacity="0.44"/><rect x="589.6" y="364.4" width="0.7" height="7.1" fill="#ffe800" opacity="0.51"/><rect x="577.8" y="364.0" width="1.0" height="11.8" fill="#90f820" opacity="0.45"/><rect x="586.6" y="366.5" width="1.4" height="5.2" fill="#70f620" opacity="0.68"/><rect x="581.2" y="375.5" width="1.0" height="1.5" fill="#90f820" opacity="0.35"/><rect x="567.6" y="373.7" width="1.0" height="3.3" fill="#e8fc00" opacity="0.50"/><rect x="594.1" y="360.1" width="1.4" height="5.4" fill="#70f620" opacity="0.47"/><rect x="579.7" y="365.6" width="0.7" height="4.6" fill="#b8fa10" opacity="0.57"/><rect x="589.5" y="373.9" width="0.7" height="3.0" fill="#b8fa10" opacity="0.40"/><rect x="574.8" y="360.8" width="0.7" height="10.7" fill="#b8fa10" opacity="0.55"/><rect x="586.8" y="369.4" width="1.4" height="7.6" fill="#90f820" opacity="0.66"/><rect x="578.9" y="371.4" width="1.0" height="5.0" fill="#70f620" opacity="0.77"/><rect x="584.0" y="357.3" width="0.7" height="13.6" fill="#ffe800" opacity="0.39"/><rect x="581.6" y="372.2" width="0.7" height="3.5" fill="#b8fa10" opacity="0.78"/><rect x="572.3" y="366.1" width="1.4" height="4.7" fill="#ffe800" opacity="0.73"/><rect x="577.9" y="362.3" width="1.0" height="4.1" fill="#90f820" opacity="0.50"/><rect x="594.6" y="360.7" width="0.7" height="10.0" fill="#e8fc00" opacity="0.42"/><rect x="588.7" y="374.6" width="1.4" height="2.4" fill="#90f820" opacity="0.32"/><rect x="581.1" y="372.2" width="0.7" height="3.5" fill="#e8fc00" opacity="0.43"/><rect x="588.1" y="359.1" width="0.7" height="5.4" fill="#ffe800" opacity="0.31"/><rect x="578.1" y="361.8" width="1.0" height="13.4" fill="#b8fa10" opacity="0.68"/><rect x="587.0" y="356.4" width="1.4" height="20.3" fill="#e8fc00" opacity="0.57"/><rect x="579.8" y="361.3" width="1.4" height="14.0" fill="#b8fa10" opacity="0.60"/><rect x="592.9" y="360.4" width="1.0" height="16.0" fill="#70f620" opacity="0.44"/><rect x="575.0" y="374.7" width="1.0" height="2.3" fill="#70f620" opacity="0.47"/><rect x="583.8" y="373.9" width="1.0" height="3.1" fill="#e8fc00" opacity="0.55"/><rect x="595.5" y="365.9" width="1.0" height="3.6" fill="#70f620" opacity="0.65"/><rect x="594.6" y="359.8" width="1.0" height="7.8" fill="#b8fa10" opacity="0.40"/><rect x="598.0" y="366.3" width="0.7" height="3.0" fill="#ffe800" opacity="0.36"/><rect x="569.1" y="369.0" width="0.7" height="6.1" fill="#b8fa10" opacity="0.59"/><rect x="574.5" y="375.8" width="1.4" height="1.2" fill="#ffe800" opacity="0.59"/><rect x="585.6" y="369.4" width="1.0" height="4.5" fill="#b8fa10" opacity="0.70"/><rect x="577.7" y="371.6" width="1.0" height="3.7" fill="#e8fc00" opacity="0.33"/><rect x="576.1" y="375.9" width="0.7" height="1.1" fill="#ffe800" opacity="0.35"/><rect x="578.6" y="367.9" width="1.0" height="4.1" fill="#90f820" opacity="0.51"/><rect x="593.6" y="366.2" width="1.0" height="5.4" fill="#70f620" opacity="0.74"/><rect x="579.1" y="376.4" width="1.0" height="0.6" fill="#ffe800" opacity="0.35"/><rect x="593.5" y="374.3" width="0.7" height="2.7" fill="#90f820" opacity="0.43"/><rect x="574.0" y="363.8" width="1.0" height="8.7" fill="#ffe800" opacity="0.55"/><rect x="580.0" y="359.2" width="1.4" height="8.6" fill="#70f620" opacity="0.52"/><rect x="580.5" y="369.6" width="1.0" height="5.0" fill="#90f820" opacity="0.40"/><rect x="599.6" y="372.2" width="0.7" height="3.2" fill="#90f820" opacity="0.41"/><rect x="588.4" y="368.4" width="1.0" height="6.5" fill="#b8fa10" opacity="0.59"/><rect x="576.2" y="365.1" width="1.4" height="9.1" fill="#ffe800" opacity="0.52"/><rect x="594.0" y="372.6" width="1.4" height="3.9" fill="#90f820" opacity="0.43"/><rect x="594.8" y="375.0" width="1.0" height="2.0" fill="#70f620" opacity="0.64"/><rect x="587.5" y="370.2" width="1.0" height="3.9" fill="#70f620" opacity="0.48"/><rect x="579.2" y="373.9" width="1.0" height="3.1" fill="#70f620" opacity="0.47"/><rect x="598.4" y="366.6" width="1.0" height="4.0" fill="#70f620" opacity="0.63"/><rect x="591.9" y="360.4" width="1.4" height="9.9" fill="#e8fc00" opacity="0.37"/><rect x="588.6" y="366.5" width="1.0" height="5.0" fill="#b8fa10" opacity="0.52"/><rect x="571.2" y="374.1" width="1.0" height="2.9" fill="#70f620" opacity="0.65"/><rect x="573.0" y="364.2" width="1.0" height="4.7" fill="#b8fa10" opacity="0.64"/><rect x="578.1" y="369.6" width="1.0" height="6.4" fill="#ffe800" opacity="0.72"/><rect x="589.0" y="373.1" width="0.7" height="3.6" fill="#ffe800" opacity="0.30"/><rect x="599.6" y="369.5" width="1.4" height="4.9" fill="#ffe800" opacity="0.68"/><rect x="593.0" y="360.0" width="0.7" height="16.6" fill="#ffe800" opacity="0.58"/><rect x="576.1" y="370.9" width="1.4" height="5.2" fill="#ffe800" opacity="0.56"/><rect x="591.4" y="375.6" width="1.4" height="1.4" fill="#e8fc00" opacity="0.78"/><rect x="582.1" y="375.8" width="1.0" height="1.2" fill="#b8fa10" opacity="0.61"/><rect x="579.8" y="374.8" width="1.0" height="2.2" fill="#70f620" opacity="0.77"/><rect x="568.4" y="377.0" width="1.0" height="0.0" fill="#e8fc00" opacity="0.50"/><rect x="576.8" y="362.4" width="1.0" height="3.7" fill="#b8fa10" opacity="0.43"/><rect x="594.8" y="373.3" width="1.0" height="3.4" fill="#ffe800" opacity="0.67"/><rect x="571.1" y="366.4" width="1.0" height="6.6" fill="#e8fc00" opacity="0.39"/><rect x="570.7" y="366.9" width="1.0" height="9.4" fill="#ffe800" opacity="0.67"/><rect x="593.1" y="356.9" width="1.4" height="16.9" fill="#70f620" opacity="0.39"/><rect x="590.6" y="363.1" width="1.4" height="3.5" fill="#b8fa10" opacity="0.36"/><rect x="572.1" y="366.1" width="1.4" height="4.8" fill="#ffe800" opacity="0.39"/><rect x="595.9" y="364.2" width="1.4" height="10.7" fill="#70f620" opacity="0.64"/><rect x="593.5" y="360.6" width="0.7" height="4.8" fill="#e8fc00" opacity="0.69"/><rect x="600.4" y="376.6" width="1.0" height="0.4" fill="#ffe800" opacity="0.61"/><rect x="590.3" y="371.8" width="1.0" height="4.2" fill="#e8fc00" opacity="0.62"/><rect x="579.2" y="361.1" width="1.0" height="4.7" fill="#b8fa10" opacity="0.76"/><rect x="595.5" y="370.4" width="1.4" height="4.1" fill="#b8fa10" opacity="0.35"/><rect x="593.4" y="375.6" width="1.4" height="1.4" fill="#70f620" opacity="0.68"/><rect x="589.6" y="367.3" width="1.0" height="8.1" fill="#e8fc00" opacity="0.46"/><rect x="575.8" y="358.4" width="1.4" height="3.9" fill="#70f620" opacity="0.42"/><rect x="584.1" y="369.9" width="1.0" height="4.0" fill="#e8fc00" opacity="0.60"/>
<rect x="568.9" y="375.6" width="0.7" height="1.4" fill="#48f438" opacity="0.45"/><rect x="560.5" y="364.8" width="1.0" height="4.2" fill="#48f438" opacity="0.41"/><rect x="559.2" y="359.4" width="1.4" height="3.4" fill="#48f438" opacity="0.41"/><rect x="564.3" y="366.9" width="1.0" height="5.5" fill="#48f438" opacity="0.50"/><rect x="563.0" y="368.6" width="1.0" height="6.3" fill="#60f630" opacity="0.54"/><rect x="568.4" y="361.1" width="1.0" height="10.4" fill="#60f630" opacity="0.48"/><rect x="559.0" y="368.7" width="1.0" height="6.4" fill="#48f438" opacity="0.43"/><rect x="560.4" y="370.5" width="0.7" height="5.1" fill="#48f438" opacity="0.41"/><rect x="568.2" y="368.2" width="0.7" height="4.6" fill="#60f630" opacity="0.39"/><rect x="556.5" y="361.3" width="1.0" height="12.9" fill="#48f438" opacity="0.34"/><rect x="552.8" y="369.3" width="1.0" height="6.7" fill="#60f630" opacity="0.38"/><rect x="564.2" y="356.9" width="1.0" height="4.7" fill="#60f630" opacity="0.41"/><rect x="562.1" y="352.5" width="1.0" height="11.4" fill="#48f438" opacity="0.47"/><rect x="566.1" y="376.5" width="0.7" height="0.5" fill="#60f630" opacity="0.39"/>
</g>
</g></g>
<g id="trmain" fill="none" stroke="#000" stroke-width=".75" stroke-linejoin="round">
<path d="M284.0 464.8L284.1 468.5L284.2 461.8L284.3 465.3L284.5 471.4L284.6 467.8L284.7 458.7L284.8 470.9L284.9 458.8L285.0 458.7L285.1 468.6L285.3 467.0L285.4 468.9L285.5 469.4L285.6 470.3L285.7 473.5L285.8 466.2L285.9 467.4L286.1 465.9L286.2 463.6L286.3 464.4L286.4 469.6L286.5 468.8L286.6 475.0L286.7 468.2L286.9 464.9L287.0 461.9L287.1 473.1L287.2 476.2L287.3 471.1L287.4 472.4L287.5 466.6L287.7 464.9L287.8 467.2L287.9 462.8L288.0 471.2L288.1 460.9L288.2 458.1L288.3 460.2L288.5 475.7L288.6 472.4L288.7 473.5L288.8 474.2L288.9 474.6L289.0 476.8L289.1 474.9L289.3 476.7L289.4 463.7L289.5 466.4L289.6 481.3L289.7 475.1L289.8 476.9L289.9 467.5L290.1 472.0L290.2 469.9L290.3 479.4L290.4 467.8L290.5 474.4L290.6 482.4L290.7 470.2L290.9 471.7L291.0 479.2L291.1 477.8L291.2 476.8L291.3 474.4L291.4 477.6L291.5 483.7L291.7 479.2L291.8 474.1L291.9 474.4L292.0 474.7L292.1 478.4L292.2 470.7L292.3 477.8L292.5 474.4L292.6 480.0L292.7 489.2L292.8 478.6L292.9 475.6L293.0 476.5L293.1 482.1L293.3 470.9L293.4 481.4L293.5 484.7L293.6 475.3L293.7 480.3L293.8 482.8L294.0 469.7L294.1 478.1L294.2 489.1L294.3 481.5L294.4 478.1L294.5 482.9L294.6 475.9L294.8 482.3L294.9 476.2L295.0 478.7L295.1 481.0L295.2 480.9L295.3 472.7L295.4 484.4L295.6 481.7L295.7 477.9L295.8 472.0L295.9 473.3L296.0 486.1L296.1 467.8L296.2 485.5L296.4 480.3L296.5 480.4L296.6 484.2L296.7 486.1L296.8 474.5L296.9 488.6L297.0 486.0L297.2 477.2L297.3 468.9L297.4 483.0L297.5 478.7L297.6 483.2L297.7 478.6L297.8 484.4L298.0 475.5L298.1 483.7L298.2 468.8L298.3 484.8L298.4 478.2L298.5 479.1L298.6 488.8L298.8 479.7L298.9 478.4L299.0 472.9L299.1 470.9L299.2 476.5L299.3 479.8L299.4 484.0L299.6 471.6L299.7 476.5L299.8 475.2L299.9 475.9L300.0 473.8L300.1 482.1L300.2 476.8L300.4 469.9L300.5 468.5L300.6 475.7L300.7 484.6L300.8 484.5L300.9 487.6L301.0 484.1L301.2 485.4L301.3 487.7L301.4 491.1L301.5 471.5L301.6 475.9L301.7 484.6L301.8 484.0L302.0 485.9L302.1 482.7L302.2 489.6L302.3 470.9L302.4 479.4L302.5 476.8L302.6 476.9L302.8 484.9L302.9 467.8L303.0 491.3L303.1 485.0L303.2 472.6L303.3 489.2L303.4 491.2L303.6 494.3L303.7 486.5L303.8 486.3L303.9 497.5L304.0 491.9L304.1 496.1L304.2 492.6L304.4 482.6L304.5 489.4L304.6 488.1L304.7 491.8L304.8 491.9L304.9 491.9L305.0 488.5L305.2 495.7L305.3 488.4L305.4 492.9L305.5 493.8L305.6 495.7L305.7 498.0L305.8 502.6L306.0 499.9L306.1 492.2L306.2 493.3L306.3 504.3L306.4 494.3L306.5 511.2L306.6 497.6L306.8 506.4L306.9 513.3L307.0 509.4L307.1 516.5L307.2 513.4L307.3 507.4L307.4 514.2L307.6 514.5L307.7 517.7L307.8 521.1L307.9 512.6L308.0 510.8L308.1 522.2L308.2 509.5L308.4 519.9L308.5 525.1L308.6 521.1L308.7 523.5L308.8 523.6L308.9 516.9L309.0 521.2L309.2 524.0L309.3 514.1L309.4 534.3L309.5 531.3L309.6 546.8L309.7 538.6L309.8 534.9L310.0 524.0L310.1 524.8L310.2 540.5L310.3 528.2L310.4 535.6L310.5 546.0L310.6 550.2L310.8 556.5L310.9 556.5L311.0 546.7L311.1 540.8L311.2 556.5L311.3 546.7L311.4 556.5L311.6 556.5L311.7 556.5L311.8 556.5L311.9 556.5L312.0 537.7L312.1 548.2L312.2 556.5L312.4 556.5L312.5 556.5L312.6 556.5L312.7 547.8L312.8 556.5L312.9 556.5L313.1 556.5L313.2 553.8L313.3 554.7L313.4 556.5L313.5 556.5L313.6 552.3L313.7 556.5L313.9 532.9L314.0 556.0L314.1 556.5L314.2 554.6L314.3 554.7L314.4 549.9L314.5 536.1L314.7 545.4L314.8 556.5L314.9 550.2L315.0 540.3L315.1 543.4L315.2 543.2L315.3 549.2L315.5 535.6L315.6 546.3L315.7 531.5L315.8 532.7L315.9 544.6L316.0 535.0L316.1 553.3L316.3 554.4L316.4 552.6L316.5 544.8L316.6 550.2L316.7 529.2L316.8 555.6L316.9 529.0L317.1 527.0L317.2 537.9L317.3 534.8L317.4 536.2L317.5 514.3L317.6 536.1L317.7 528.8L317.9 524.9L318.0 537.5L318.1 520.8L318.2 517.1L318.3 521.9L318.4 521.2L318.5 510.8L318.7 513.5L318.8 507.9L318.9 510.3L319.0 505.5L319.1 510.1L319.2 496.3L319.3 503.5L319.5 503.2L319.6 514.8L319.7 516.3L319.8 514.2L319.9 503.6L320.0 513.5L320.1 513.8L320.3 520.2L320.4 528.5L320.5 509.5L320.6 527.9L320.7 520.3L320.8 518.8L320.9 519.6L321.1 526.4L321.2 508.5L321.3 524.1L321.4 523.9L321.5 532.1L321.6 518.1L321.7 506.2L321.9 525.2L322.0 525.0L322.1 539.4L322.2 527.7L322.3 528.3L322.4 526.8L322.5 526.5L322.7 520.1L322.8 529.3L322.9 520.0L323.0 529.0L323.1 526.8L323.2 514.9L323.3 529.8L323.5 513.6L323.6 507.6L323.7 517.2L323.8 508.7L323.9 490.3L324.0 511.2L324.1 520.2L324.3 516.9L324.4 502.7L324.5 518.2L324.6 510.9L324.7 513.4L324.8 521.7L324.9 506.1L325.1 509.8L325.2 501.1L325.3 495.0L325.4 512.0L325.5 524.2L325.6 512.8L325.7 508.6L325.9 503.3L326.0 483.4L326.1 510.1L326.2 529.0L326.3 499.5L326.4 496.6L326.5 501.1L326.7 500.5L326.8 502.2L326.9 497.5L327.0 490.6L327.1 505.3L327.2 502.2L327.3 496.9L327.5 496.0L327.6 503.1L327.7 483.4L327.8 502.1L327.9 492.6L328.0 490.3L328.1 489.1L328.3 476.6L328.4 495.6L328.5 485.5L328.6 483.5L328.7 490.5L328.8 492.6L328.9 477.8L329.1 485.3L329.2 490.3L329.3 480.4L329.4 485.7L329.5 485.5L329.6 480.3L329.7 485.3L329.9 472.5L330.0 478.0L330.1 484.3L330.2 482.3L330.3 487.5L330.4 485.4L330.5 479.9L330.7 489.8L330.8 467.6L330.9 482.6L331.0 480.8L331.1 477.5L331.2 482.0L331.3 476.3L331.5 466.1L331.6 478.1L331.7 471.9L331.8 474.9L331.9 471.5L332.0 480.6L332.2 482.9L332.3 461.4L332.4 483.2L332.5 476.0L332.6 466.2L332.7 463.6L332.8 473.9L333.0 476.2L333.1 473.0L333.2 478.2L333.3 470.5L333.4 475.1L333.5 467.3L333.6 473.4L333.8 470.2L333.9 471.8L334.0 475.3L334.1 470.3L334.2 477.0L334.3 474.6L334.4 470.4L334.6 468.7L334.7 472.8L334.8 471.7L334.9 470.3L335.0 468.0L335.1 467.5L335.2 465.7L335.4 471.0L335.5 466.3L335.6 474.3L335.7 479.1L335.8 456.0L335.9 467.2L336.0 464.7L336.2 459.9L336.3 471.7L336.4 462.2L336.5 467.9L336.6 460.4L336.7 458.8L336.8 462.8L337.0 470.7L337.1 455.7L337.2 464.8L337.3 470.2L337.4 454.2L337.5 477.8L337.6 461.0L337.8 469.5L337.9 463.1L338.0 466.3L338.1 462.4L338.2 457.2L338.3 469.6L338.4 465.3L338.6 468.8L338.7 466.5L338.8 466.3L338.9 469.4L339.0 466.4L339.1 464.5L339.2 461.2L339.4 460.2L339.5 460.0L339.6 456.6L339.7 465.5L339.8 468.6L339.9 463.0L340.0 462.7L340.2 454.0L340.3 459.7L340.4 462.1L340.5 465.8L340.6 466.7L340.7 460.3L340.8 460.0L341.0 459.8L341.1 461.2L341.2 463.6L341.3 460.4L341.4 460.1L341.5 452.7L341.6 449.6L341.8 461.4L341.9 463.3L342.0 450.5L342.1 460.7L342.2 457.9L342.3 461.5L342.4 458.1L342.6 461.2L342.7 463.6L342.8 462.9L342.9 460.7L343.0 455.9L343.1 451.5L343.2 464.4L343.4 464.0L343.5 464.5L343.6 456.5L343.7 472.0L343.8 469.5L343.9 462.0L344.0 457.6L344.2 456.2L344.3 467.2L344.4 461.3L344.5 460.1L344.6 453.2L344.7 451.6L344.8 461.6L345.0 462.2L345.1 458.4L345.2 458.9L345.3 464.5L345.4 467.0L345.5 466.8L345.6 462.7L345.8 463.7L345.9 468.9L346.0 459.3L346.1 459.4L346.2 463.4L346.3 466.1L346.4 469.2L346.6 457.8L346.7 470.5L346.8 464.5L346.9 461.0L347.0 460.3L347.1 464.6L347.2 474.7L347.4 461.8L347.5 466.8L347.6 470.9L347.7 465.6L347.8 467.3L347.9 471.6L348.0 466.7L348.2 463.0L348.3 475.3L348.4 469.0L348.5 475.3L348.6 466.6L348.7 466.1L348.8 461.3L349.0 466.9L349.1 468.2L349.2 463.9L349.3 458.4L349.4 462.4L349.5 465.7L349.6 466.9L349.8 474.6L349.9 468.5L350.0 467.4L350.1 467.9L350.2 457.0L350.3 472.1L350.4 466.3L350.6 464.5L350.7 464.4L350.8 461.0L350.9 472.3L351.0 463.5L351.1 474.2L351.3 473.1L351.4 478.6L351.5 472.9L351.6 473.4L351.7 469.8L351.8 477.5L351.9 470.9L352.1 467.0L352.2 480.3L352.3 477.1L352.4 479.2L352.5 465.3L352.6 485.9L352.7 469.4L352.9 477.0L353.0 477.2L353.1 470.2L353.2 469.7L353.3 479.2L353.4 479.0L353.5 473.5L353.7 483.2L353.8 476.9L353.9 487.0L354.0 485.3L354.1 478.1L354.2 485.2L354.3 481.2L354.5 475.7L354.6 487.6L354.7 482.6L354.8 479.6L354.9 485.4L355.0 482.1L355.1 488.6L355.3 482.7L355.4 485.3L355.5 488.9L355.6 482.4L355.7 496.6L355.8 481.8L355.9 478.0L356.1 492.7L356.2 489.3L356.3 481.2L356.4 481.4L356.5 487.1L356.6 482.7L356.7 487.0L356.9 490.2L357.0 478.0L357.1 494.5L357.2 477.7L357.3 485.2L357.4 484.5L357.5 491.6L357.7 483.0L357.8 480.2L357.9 489.4L358.0 481.3L358.1 492.0L358.2 486.3L358.3 486.2L358.5 479.1L358.6 489.9L358.7 495.2L358.8 488.6L358.9 493.9L359.0 502.6L359.1 499.9L359.3 501.6L359.4 490.6L359.5 494.6L359.6 499.9L359.7 491.2L359.8 493.6L359.9 490.5L360.1 486.7L360.2 498.4L360.3 499.9L360.4 499.2L360.5 490.8L360.6 490.8L360.7 496.8L360.9 496.4L361.0 486.3L361.1 491.5L361.2 490.8L361.3 501.2L361.4 500.0L361.5 493.6L361.7 493.7L361.8 492.8L361.9 493.3L362.0 501.4L362.1 506.1L362.2 467.3L362.3 499.7L362.5 504.5L362.6 508.1L362.7 505.8L362.8 504.4L362.9 491.3L363.0 499.6L363.1 488.0L363.3 508.8L363.4 493.0L363.5 507.9L363.6 500.4L363.7 503.6L363.8 508.6L363.9 503.0L364.1 499.8L364.2 506.9L364.3 510.4L364.4 500.8L364.5 500.5L364.6 506.8L364.7 507.6L364.9 496.4L365.0 507.4L365.1 521.2L365.2 510.3L365.3 495.1L365.4 502.7L365.5 505.1L365.7 509.3L365.8 502.5L365.9 499.8L366.0 508.8L366.1 506.3L366.2 512.2L366.3 499.5L366.5 511.9L366.6 519.5L366.7 502.9L366.8 518.0L366.9 502.5L367.0 507.6L367.1 508.5L367.3 506.8L367.4 505.7L367.5 511.1L367.6 521.4L367.7 520.0L367.8 504.1L367.9 502.0L368.1 503.9L368.2 514.3L368.3 499.4L368.4 501.2L368.5 510.0L368.6 507.4L368.7 510.7L368.9 510.4L369.0 513.1L369.1 505.4L369.2 513.8L369.3 526.4L369.4 514.4L369.5 507.6L369.7 503.3L369.8 517.1L369.9 514.1L370.0 524.1L370.1 516.8L370.2 506.2L370.4 532.2L370.5 517.2L370.6 514.9L370.7 509.0L370.8 527.7L370.9 505.0L371.0 514.8L371.2 509.2L371.3 521.1L371.4 520.4L371.5 511.3L371.6 499.1L371.7 517.0L371.8 515.0L372.0 523.3L372.1 503.3L372.2 509.5L372.3 531.0L372.4 513.2L372.5 523.5L372.6 519.4L372.8 512.8L372.9 509.4L373.0 512.6L373.1 513.5L373.2 518.1L373.3 516.0L373.4 520.8L373.6 514.6L373.7 523.2L373.8 505.9L373.9 526.6L374.0 510.4L374.1 519.3L374.2 528.7L374.4 511.7L374.5 509.5L374.6 525.7L374.7 523.4L374.8 535.3L374.9 519.1L375.0 509.2L375.2 514.1L375.3 520.4L375.4 525.0L375.5 524.8L375.6 524.5L375.7 536.8L375.8 536.4L376.0 524.7L376.1 524.8L376.2 523.5L376.3 519.5L376.4 521.0L376.5 510.7L376.6 516.6L376.8 516.4L376.9 524.0L377.0 556.5L377.1 534.9L377.2 525.7L377.3 520.6L377.4 535.6L377.6 522.6L377.7 525.4L377.8 515.3L377.9 529.3L378.0 518.7L378.1 533.3L378.2 516.2L378.4 533.9L378.5 520.4L378.6 523.4L378.7 522.1L378.8 513.2L378.9 539.5L379.0 524.3L379.2 512.8L379.3 532.9L379.4 514.3L379.5 517.5L379.6 532.3L379.7 526.8L379.8 538.4L380.0 513.2L380.1 532.5L380.2 513.7L380.3 534.9L380.4 516.7L380.5 525.5L380.6 529.8L380.8 531.1L380.9 538.8L381.0 519.0L381.1 520.8L381.2 527.3L381.3 539.7L381.4 538.9L381.6 534.6L381.7 514.3L381.8 520.5L381.9 518.4L382.0 529.4L382.1 532.8L382.2 538.3L382.4 521.0L382.5 537.8L382.6 535.3L382.7 528.2L382.8 529.4L382.9 524.4L383.0 525.7L383.2 528.4L383.3 534.2L383.4 522.5L383.5 530.1L383.6 521.3L383.7 536.7L383.8 496.7L384.0 530.4L384.1 533.4L384.2 515.3L384.3 524.0L384.4 531.4L384.5 527.8L384.6 542.7L384.8 542.0L384.9 517.9L385.0 515.4L385.1 525.5L385.2 531.0L385.3 530.0L385.4 531.7L385.6 542.7L385.7 512.6L385.8 532.5L385.9 518.8L386.0 533.8L386.1 531.5L386.2 527.4L386.4 524.7L386.5 535.3L386.6 534.3L386.7 525.9L386.8 530.9L386.9 530.0L387.0 529.5L387.2 546.9L387.3 534.4L387.4 541.0L387.5 519.3L387.6 544.6L387.7 540.5L387.8 524.5L388.0 533.0L388.1 528.2L388.2 528.2L388.3 529.0L388.4 522.1L388.5 530.5L388.6 538.9L388.8 534.9L388.9 525.8L389.0 524.9L389.1 546.0L389.2 546.3L389.3 537.1L389.5 525.7L389.6 532.6L389.7 516.9L389.8 549.0L389.9 536.9L390.0 535.5L390.1 531.1L390.3 520.5L390.4 534.5L390.5 520.1L390.6 536.6L390.7 524.4L390.8 536.7L390.9 529.6L391.1 537.7L391.2 543.8L391.3 535.2L391.4 533.9L391.5 531.7L391.6 537.5L391.7 536.2L391.9 523.5L392.0 531.8L392.1 525.1L392.2 535.1L392.3 526.5L392.4 531.4L392.5 532.8L392.7 536.8L392.8 528.6L392.9 529.9L393.0 536.2L393.1 541.9L393.2 533.2L393.3 541.5L393.5 541.1L393.6 528.0L393.7 543.7L393.8 547.1L393.9 538.8L394.0 524.1L394.1 531.8L394.3 538.5L394.4 532.2L394.5 533.3L394.6 547.1L394.7 530.5L394.8 528.8L394.9 525.5L395.1 529.3L395.2 548.9L395.3 524.9L395.4 524.9L395.5 534.0L395.6 530.3L395.7 536.0L395.9 539.6L396.0 541.6L396.1 541.9L396.2 518.3L396.3 538.8L396.4 526.2L396.5 535.1L396.7 527.3L396.8 514.7L396.9 542.4L397.0 539.9L397.1 520.8L397.2 551.0L397.3 529.6L397.5 529.5L397.6 529.0L397.7 518.9L397.8 538.0L397.9 547.1L398.0 532.0L398.1 540.1L398.3 507.0L398.4 530.8L398.5 530.0L398.6 518.2L398.7 530.2L398.8 526.7L398.9 533.7L399.1 531.0L399.2 544.9L399.3 543.4L399.4 532.4L399.5 530.7L399.6 534.0L399.7 532.9L399.9 542.3L400.0 543.0L400.1 539.9L400.2 525.1L400.3 530.3L400.4 525.8L400.5 537.2L400.7 532.9L400.8 540.1L400.9 520.9L401.0 541.6L401.1 538.5L401.2 530.7L401.3 530.0L401.5 556.5L401.6 536.4L401.7 537.2L401.8 541.7L401.9 537.6L402.0 538.9L402.1 538.2L402.3 538.6L402.4 540.4L402.5 523.9L402.6 525.0L402.7 533.9L402.8 522.4L402.9 537.3L403.1 523.2L403.2 535.2L403.3 534.2L403.4 515.5L403.5 534.9L403.6 537.8L403.7 519.8L403.9 526.7L404.0 537.0L404.1 527.2L404.2 540.6L404.3 537.9L404.4 520.4L404.5 537.1L404.7 540.4L404.8 531.7L404.9 532.9L405.0 542.4L405.1 522.6L405.2 506.5L405.3 548.4L405.5 526.4L405.6 531.0L405.7 508.5L405.8 528.0L405.9 531.5L406.0 527.6L406.1 523.6L406.3 549.0L406.4 540.2L406.5 538.6L406.6 520.6L406.7 527.4L406.8 524.6L406.9 538.1L407.1 520.8L407.2 531.7L407.3 548.1L407.4 532.4L407.5 543.3L407.6 527.2L407.7 540.2L407.9 529.2L408.0 525.4L408.1 533.5L408.2 527.2L408.3 526.8L408.4 532.7L408.6 532.5L408.7 526.5L408.8 544.8L408.9 539.5L409.0 525.8L409.1 524.6L409.2 534.2L409.4 509.0L409.5 529.0L409.6 537.2L409.7 537.0L409.8 537.7L409.9 536.7L410.0 523.7L410.2 517.2L410.3 534.8L410.4 527.4L410.5 536.8L410.6 539.1L410.7 527.9L410.8 530.5L411.0 548.7L411.1 539.2L411.2 524.2L411.3 541.2L411.4 547.1L411.5 527.7L411.6 536.4L411.8 528.0L411.9 515.6L412.0 534.3L412.1 532.8L412.2 528.6L412.3 520.6L412.4 535.1L412.6 530.7L412.7 537.5L412.8 530.3L412.9 532.3L413.0 531.5L413.1 535.3L413.2 530.4L413.4 538.2L413.5 533.8L413.6 535.6L413.7 540.1L413.8 543.3L413.9 535.6L414.0 530.2L414.2 535.1L414.3 529.4L414.4 520.1L414.5 546.7L414.6 528.2L414.7 533.4L414.8 532.0L415.0 527.9L415.1 529.7L415.2 537.6L415.3 536.1L415.4 530.7L415.5 531.8L415.6 546.1L415.8 527.6L415.9 530.8L416.0 539.8L416.1 546.4L416.2 540.8L416.3 539.4L416.4 532.6L416.6 536.0L416.7 541.6L416.8 541.7L416.9 544.1L417.0 526.3L417.1 541.0L417.2 537.7L417.4 529.7L417.5 527.3L417.6 531.5L417.7 527.9L417.8 530.0L417.9 529.8L418.0 531.0L418.2 511.0L418.3 535.8L418.4 537.4L418.5 539.4L418.6 534.7L418.7 538.3L418.8 525.0L419.0 522.8L419.1 541.6L419.2 539.6L419.3 512.0L419.4 544.8L419.5 525.0L419.6 543.1L419.8 541.5L419.9 533.0L420.0 529.9L420.1 532.8L420.2 519.0L420.3 540.3L420.4 530.3L420.6 531.9L420.7 518.9L420.8 543.7L420.9 536.7L421.0 536.3L421.1 529.6L421.2 528.8L421.4 519.9L421.5 543.1L421.6 530.7L421.7 539.2L421.8 535.2L421.9 531.1L422.0 536.3L422.2 533.0L422.3 538.0L422.4 538.9L422.5 529.8L422.6 538.5L422.7 539.9L422.8 520.5L423.0 528.7L423.1 525.7L423.2 527.6L423.3 536.9L423.4 536.3L423.5 537.9L423.6 534.5L423.8 528.8L423.9 533.4L424.0 529.3L424.1 538.6L424.2 544.4L424.3 531.5L424.4 541.5L424.6 530.9L424.7 527.7L424.8 535.7L424.9 541.3L425.0 526.9L425.1 528.7L425.2 527.4L425.4 544.5L425.5 534.1L425.6 536.0L425.7 541.5L425.8 538.2L425.9 543.1L426.0 529.6L426.2 535.9L426.3 525.4L426.4 538.6L426.5 531.8L426.6 533.8L426.7 536.5L426.8 521.2L427.0 522.9L427.1 531.9L427.2 528.9L427.3 530.1L427.4 513.3L427.5 544.4L427.7 527.0L427.8 534.8L427.9 539.2L428.0 519.2L428.1 529.1L428.2 541.9L428.3 527.2L428.5 538.0L428.6 534.9L428.7 528.8L428.8 525.0L428.9 528.6L429.0 527.5L429.1 538.5L429.3 544.3L429.4 516.2L429.5 532.1L429.6 528.7L429.7 528.3L429.8 540.2L429.9 527.3L430.1 526.0L430.2 535.6L430.3 531.7L430.4 540.1L430.5 536.3L430.6 523.0L430.7 535.2L430.9 534.1L431.0 533.7L431.1 541.7L431.2 540.0L431.3 525.0L431.4 529.4L431.5 531.8L431.7 539.8L431.8 527.8L431.9 528.7L432.0 516.7L432.1 535.6L432.2 530.3L432.3 526.5L432.5 541.0L432.6 538.2L432.7 539.0L432.8 527.5L432.9 530.2L433.0 527.3L433.1 539.5L433.3 530.6L433.4 527.6L433.5 522.2L433.6 536.1L433.7 522.8L433.8 535.4L433.9 539.9L434.1 523.6L434.2 517.0L434.3 527.9L434.4 495.8L434.5 526.5L434.6 527.1L434.7 541.7L434.9 539.8L435.0 531.8L435.1 536.4L435.2 530.0L435.3 529.9L435.4 532.5L435.5 537.2L435.7 525.8L435.8 531.4L435.9 523.8L436.0 505.4L436.1 526.3L436.2 532.0L436.3 529.1L436.5 526.6L436.6 525.3L436.7 521.8L436.8 532.3L436.9 522.3L437.0 533.9L437.1 531.1L437.3 526.3L437.4 526.9L437.5 518.7L437.6 529.9L437.7 537.4L437.8 528.5L437.9 488.9L438.1 533.1L438.2 525.0L438.3 522.6L438.4 526.9L438.5 536.9L438.6 529.4L438.7 527.4L438.9 536.1L439.0 518.5L439.1 523.6L439.2 531.8L439.3 537.4L439.4 523.1L439.5 526.6L439.7 518.6L439.8 520.1L439.9 524.7L440.0 517.5L440.1 546.1L440.2 527.1L440.3 532.0L440.5 541.2L440.6 527.3L440.7 521.0L440.8 523.9L440.9 524.4L441.0 532.1L441.1 532.2L441.3 523.6L441.4 530.0L441.5 528.1L441.6 518.2L441.7 535.4L441.8 533.2L441.9 529.0L442.1 525.5L442.2 527.0L442.3 524.0L442.4 520.5L442.5 513.9L442.6 516.6L442.7 523.2L442.9 506.8L443.0 530.2L443.1 511.4L443.2 528.1L443.3 532.8L443.4 528.9L443.5 522.2L443.7 520.2L443.8 518.5L443.9 537.3L444.0 526.8L444.1 519.9L444.2 531.1L444.3 522.8L444.5 524.1L444.6 526.2L444.7 523.5L444.8 522.1L444.9 526.3L445.0 523.8L445.1 520.4L445.3 514.2L445.4 521.0L445.5 518.1L445.6 519.3L445.7 520.1L445.8 511.4L445.9 525.6L446.1 503.7L446.2 506.2L446.3 518.0L446.4 512.4L446.5 524.0L446.6 527.4L446.8 521.9L446.9 525.9L447.0 522.8L447.1 517.9L447.2 520.5L447.3 524.5L447.4 525.3L447.6 522.6L447.7 523.1L447.8 529.7L447.9 520.6L448.0 523.8L448.1 514.0L448.2 530.0L448.4 528.2L448.5 509.8L448.6 529.0L448.7 507.8L448.8 529.2L448.9 521.6L449.0 525.9L449.2 521.1L449.3 525.1L449.4 513.8L449.5 541.6L449.6 527.9L449.7 531.7L449.8 520.2L450.0 507.2L450.1 505.4L450.2 521.0L450.3 513.3L450.4 515.0L450.5 522.7L450.6 532.8L450.8 521.6L450.9 515.3L451.0 518.0L451.1 519.7L451.2 533.1L451.3 518.8L451.4 521.1L451.6 519.9L451.7 509.2L451.8 530.0L451.9 518.7L452.0 516.6L452.1 515.9L452.2 514.7L452.4 510.8L452.5 517.4L452.6 510.3L452.7 528.3L452.8 520.2L452.9 520.7L453.0 521.7L453.2 523.7L453.3 510.0L453.4 520.8L453.5 518.2L453.6 531.3L453.7 513.4L453.8 518.0L454.0 521.3L454.1 515.6L454.2 512.7L454.3 513.9L454.4 504.9L454.5 510.5L454.6 520.0L454.8 504.9L454.9 496.7L455.0 520.6L455.1 508.7L455.2 515.3L455.3 499.7L455.4 501.8L455.6 507.5L455.7 514.2L455.8 516.9L455.9 492.3L456.0 508.2L456.1 504.6L456.2 496.6L456.4 525.4L456.5 514.0L456.6 503.0L456.7 509.8L456.8 517.8L456.9 507.0L457.0 502.1L457.2 505.6L457.3 502.8L457.4 509.2L457.5 516.2L457.6 497.2L457.7 508.8L457.8 507.5L458.0 510.1L458.1 498.8L458.2 505.1L458.3 511.6L458.4 516.2L458.5 511.9L458.6 483.0L458.8 496.5L458.9 513.1L459.0 507.5L459.1 508.6L459.2 506.9L459.3 497.0L459.4 487.1L459.6 516.8L459.7 492.5L459.8 504.9L459.9 500.6L460.0 497.6L460.1 498.9L460.2 510.5L460.4 505.0L460.5 510.0L460.6 501.2L460.7 497.2L460.8 503.3L460.9 499.4L461.0 503.5L461.2 507.6L461.3 500.0L461.4 502.5L461.5 499.8L461.6 495.9L461.7 502.8L461.8 495.2L462.0 503.9L462.1 498.4L462.2 493.8L462.3 506.4L462.4 500.0L462.5 493.7L462.6 515.3L462.8 493.4L462.9 492.6L463.0 500.6L463.1 486.6L463.2 501.4L463.3 488.1L463.4 498.8L463.6 498.3L463.7 500.9L463.8 501.3L463.9 489.8L464.0 510.3L464.1 505.8L464.2 500.8L464.4 492.9L464.5 499.3L464.6 494.3L464.7 494.2L464.8 505.4L464.9 504.0L465.1 499.2L465.2 520.4L465.3 502.7L465.4 500.4L465.5 506.7L465.6 496.0L465.7 502.2L465.9 510.3L466.0 494.6L466.1 503.7L466.2 505.2L466.3 496.3L466.4 505.1L466.5 505.0L466.7 499.9L466.8 509.1L466.9 505.8L467.0 499.2L467.1 502.2L467.2 502.0L467.3 514.2L467.5 490.7L467.6 509.1L467.7 511.4L467.8 509.8L467.9 507.0L468.0 503.7L468.1 512.8L468.3 502.0L468.4 501.6L468.5 497.7L468.6 508.1L468.7 503.4L468.8 508.8L468.9 508.4L469.1 498.8L469.2 511.7L469.3 505.7L469.4 503.8L469.5 519.1L469.6 510.7L469.7 502.8L469.9 505.0L470.0 512.8L470.1 505.1L470.2 513.8L470.3 475.8L470.4 501.8L470.5 515.0L470.7 514.9L470.8 513.0L470.9 507.8L471.0 506.4L471.1 528.6L471.2 499.6L471.3 508.2L471.5 515.7L471.6 512.6L471.7 509.0L471.8 503.7L471.9 505.8L472.0 508.8L472.1 524.5L472.3 512.4L472.4 510.3L472.5 502.4L472.6 524.5L472.7 508.0L472.8 517.9L472.9 516.8L473.1 522.4L473.2 509.4L473.3 511.2L473.4 500.9L473.5 508.4L473.6 520.5L473.7 518.4L473.9 509.2L474.0 518.3L474.1 521.0L474.2 527.3L474.3 518.9L474.4 508.3L474.5 516.3L474.7 511.7L474.8 519.6L474.9 519.2L475.0 507.8L475.1 514.0L475.2 515.3L475.3 517.7L475.5 487.8L475.6 514.3L475.7 502.8L475.8 515.5L475.9 516.1L476.0 525.8L476.1 521.4L476.3 516.2L476.4 517.1L476.5 513.2L476.6 505.3L476.7 508.5L476.8 515.4L476.9 532.4L477.1 507.7L477.2 508.4L477.3 518.2L477.4 502.3L477.5 522.0L477.6 513.0L477.7 516.0L477.9 526.6L478.0 513.7L478.1 518.9L478.2 506.9L478.3 532.0L478.4 508.1L478.5 517.0L478.7 516.2L478.8 506.6L478.9 522.9L479.0 506.5L479.1 514.0L479.2 519.7L479.3 516.4L479.5 512.9L479.6 525.8L479.7 510.3L479.8 510.6L479.9 512.9L480.0 520.7L480.1 512.7L480.3 520.1L480.4 515.9L480.5 516.9L480.6 530.1L480.7 512.4L480.8 518.5L480.9 513.1L481.1 507.5L481.2 520.2L481.3 507.5L481.4 515.1L481.5 519.2L481.6 512.8L481.7 525.4L481.9 532.8L482.0 518.0L482.1 520.6L482.2 511.4L482.3 515.6L482.4 522.1L482.5 514.0L482.7 514.3L482.8 516.0L482.9 511.3L483.0 532.6L483.1 525.5L483.2 520.7L483.3 523.5L483.5 520.9L483.6 532.8L483.7 512.4L483.8 523.7L483.9 523.3L484.0 518.6L484.2 518.8L484.3 519.0L484.4 507.1L484.5 522.6L484.6 526.2L484.7 524.4L484.8 508.0L485.0 530.4L485.1 528.0L485.2 523.9L485.3 513.0L485.4 527.3L485.5 509.4L485.6 518.3L485.8 507.4L485.9 534.1L486.0 516.3L486.1 511.9L486.2 528.7L486.3 506.7L486.4 518.4L486.6 523.5L486.7 525.9L486.8 534.1L486.9 511.4L487.0 527.6L487.1 520.9L487.2 514.8L487.4 530.5L487.5 519.3L487.6 507.7L487.7 532.9L487.8 520.1L487.9 525.0L488.0 522.7L488.2 514.9L488.3 524.0L488.4 518.3L488.5 520.3L488.6 523.4L488.7 538.7L488.8 517.7L489.0 525.8L489.1 519.9L489.2 525.8L489.3 525.0L489.4 527.0L489.5 520.5L489.6 509.2L489.8 525.9L489.9 520.3L490.0 525.7L490.1 512.3L490.2 518.3L490.3 512.0L490.4 534.1L490.6 518.6L490.7 514.8L490.8 526.6L490.9 514.4L491.0 522.0L491.1 527.6L491.2 522.6L491.4 511.8L491.5 526.8L491.6 526.0L491.7 514.9L491.8 514.0L491.9 532.6L492.0 517.7L492.2 524.0L492.3 515.7L492.4 513.4L492.5 519.9L492.6 525.7L492.7 526.2L492.8 507.8L493.0 521.1L493.1 513.8L493.2 526.3L493.3 524.3L493.4 508.2L493.5 521.2L493.6 512.7L493.8 520.3L493.9 507.9L494.0 528.0L494.1 528.6L494.2 520.1L494.3 523.0L494.4 519.7L494.6 525.1L494.7 511.9L494.8 503.4L494.9 519.3L495.0 517.5L495.1 529.7L495.2 520.1L495.4 526.8L495.5 522.5L495.6 532.2L495.7 522.8L495.8 515.3L495.9 514.9L496.0 521.9L496.2 531.3L496.3 525.1L496.4 511.3L496.5 527.2L496.6 520.5L496.7 511.5L496.8 510.9L497.0 509.8L497.1 518.1L497.2 531.1L497.3 518.3L497.4 521.2L497.5 518.3L497.6 508.5L497.8 521.3L497.9 515.9L498.0 522.0L498.1 522.0L498.2 528.6L498.3 521.5L498.4 528.0L498.6 508.1L498.7 513.9L498.8 532.3L498.9 512.8L499.0 525.7L499.1 519.3L499.2 515.8L499.4 508.0L499.5 522.3L499.6 525.5L499.7 521.3L499.8 518.3L499.9 519.6L500.0 510.0L500.2 523.6L500.3 526.5L500.4 527.0L500.5 510.4L500.6 518.9L500.7 518.9L500.8 519.0L501.0 521.4L501.1 512.4L501.2 500.5L501.3 515.5L501.4 509.6L501.5 516.8L501.6 516.8L501.8 515.3L501.9 516.5L502.0 513.9L502.1 516.2L502.2 521.0L502.3 518.2L502.4 506.0L502.6 516.4L502.7 520.9L502.8 511.7L502.9 518.4L503.0 518.4L503.1 508.2L503.3 507.1L503.4 514.6L503.5 512.7L503.6 509.9L503.7 505.4L503.8 512.0L503.9 507.6L504.1 512.6L504.2 513.1L504.3 515.3L504.4 521.0L504.5 500.4L504.6 506.0L504.7 536.7L504.9 510.7L505.0 514.9L505.1 529.3L505.2 522.5L505.3 509.8L505.4 514.5L505.5 514.7L505.7 523.9L505.8 511.8L505.9 517.6L506.0 520.2L506.1 534.9L506.2 503.8L506.3 501.6L506.5 508.9L506.6 503.2L506.7 506.3L506.8 507.6L506.9 509.9L507.0 512.7L507.1 511.2L507.3 509.4L507.4 513.4L507.5 509.6L507.6 513.8L507.7 510.6L507.8 514.6L507.9 514.0L508.1 509.7L508.2 512.4L508.3 508.3L508.4 512.0L508.5 511.1L508.6 508.7L508.7 503.4L508.9 504.1L509.0 516.6L509.1 510.3L509.2 499.8L509.3 511.1L509.4 509.7L509.5 499.1L509.7 516.9L509.8 501.6L509.9 514.7L510.0 507.6L510.1 515.6L510.2 520.3L510.3 509.6L510.5 521.6L510.6 492.7L510.7 510.6L510.8 517.2L510.9 521.5L511.0 500.8L511.1 512.4L511.3 496.7L511.4 519.8L511.5 517.5L511.6 504.6L511.7 515.9L511.8 500.7L511.9 508.0L512.1 497.7L512.2 517.6L512.3 513.4L512.4 511.9L512.5 514.5L512.6 509.8L512.7 512.5L512.9 515.5L513.0 508.9L513.1 498.3L513.2 518.8L513.3 510.7L513.4 518.0L513.5 506.8L513.7 500.7L513.8 503.0L513.9 509.7L514.0 509.0L514.1 514.2L514.2 513.4L514.3 506.8L514.5 519.2L514.6 506.1L514.7 514.4L514.8 507.7L514.9 505.2L515.0 508.8L515.1 506.5L515.3 514.9L515.4 498.6L515.5 511.9L515.6 507.8L515.7 502.8L515.8 500.1L515.9 508.8L516.1 509.1L516.2 501.9L516.3 499.8L516.4 518.7L516.5 507.3L516.6 499.4L516.7 513.5L516.9 505.6L517.0 511.5L517.1 505.4L517.2 516.4L517.3 505.4L517.4 500.4L517.5 500.2L517.7 508.5L517.8 505.7L517.9 502.7L518.0 504.1L518.1 505.3L518.2 494.1L518.3 505.9L518.5 499.5L518.6 503.6L518.7 504.7L518.8 504.3L518.9 509.9L519.0 499.4L519.1 502.0L519.3 494.1L519.4 503.8L519.5 499.4L519.6 501.8L519.7 505.2L519.8 505.4L519.9 503.5L520.1 500.6L520.2 498.3L520.3 503.1L520.4 509.0L520.5 507.2L520.6 498.7L520.7 491.9L520.9 493.7L521.0 499.1L521.1 491.8L521.2 492.2L521.3 493.6L521.4 508.2L521.5 495.3L521.7 501.6L521.8 496.1L521.9 500.2L522.0 495.2L522.1 494.7L522.2 498.8L522.4 485.0L522.5 490.0L522.6 511.3L522.7 497.8L522.8 481.9L522.9 495.1L523.0 492.9L523.2 492.8L523.3 502.0L523.4 495.2L523.5 492.4L523.6 500.2L523.7 500.2L523.8 495.1L524.0 502.1L524.1 493.9L524.2 485.1L524.3 489.9L524.4 503.9L524.5 503.1L524.6 485.1L524.8 491.4L524.9 492.6L525.0 495.5L525.1 481.6L525.2 498.1L525.3 495.7L525.4 489.9L525.6 503.0L525.7 498.4L525.8 489.3L525.9 494.8L526.0 483.8L526.1 493.1L526.2 485.6L526.4 483.7L526.5 485.0L526.6 482.5L526.7 492.2L526.8 487.5L526.9 484.9L527.0 486.4L527.2 488.1L527.3 492.8L527.4 495.5L527.5 491.1L527.6 477.9L527.7 477.7L527.8 482.5L528.0 478.3L528.1 495.2L528.2 483.1L528.3 489.0L528.4 484.2L528.5 488.2L528.6 482.4L528.8 479.6L528.9 476.2L529.0 485.7L529.1 487.9L529.2 478.7L529.3 486.3L529.4 489.6L529.6 480.1L529.7 479.3L529.8 484.6L529.9 480.5L530.0 478.8L530.1 482.4L530.2 471.0L530.4 477.0L530.5 467.3L530.6 479.1L530.7 484.0L530.8 486.2L530.9 470.8L531.0 485.8L531.2 479.7L531.3 479.3L531.4 478.8L531.5 482.1L531.6 478.1L531.7 478.8L531.8 477.4L532.0 480.2L532.1 476.5L532.2 474.5L532.3 481.4L532.4 478.3L532.5 476.7L532.6 470.1L532.8 469.9L532.9 474.6L533.0 470.3L533.1 480.6L533.2 471.6L533.3 472.4L533.4 469.3L533.6 476.3L533.7 464.8L533.8 476.0L533.9 480.3L534.0 472.9L534.1 474.6L534.2 474.2L534.4 474.4L534.5 469.2L534.6 468.6L534.7 456.4L534.8 469.2L534.9 471.3L535.0 474.4L535.2 462.2L535.3 462.9L535.4 467.8L535.5 466.4L535.6 470.7L535.7 460.2L535.8 470.3L536.0 464.9L536.1 475.1L536.2 473.0L536.3 465.7L536.4 468.1L536.5 465.1L536.6 468.8L536.8 463.4L536.9 467.1L537.0 467.9L537.1 465.2L537.2 463.6L537.3 467.5L537.4 464.7L537.6 471.7L537.7 463.1L537.8 470.2L537.9 464.7L538.0 464.7L538.1 465.8L538.2 467.2L538.4 469.4L538.5 469.4L538.6 472.6L538.7 468.5L538.8 469.1L538.9 467.4L539.0 468.5L539.2 465.9L539.3 465.9L539.4 465.4L539.5 465.6L539.6 461.6L539.7 460.1L539.8 465.6L540.0 465.8L540.1 463.2L540.2 471.6L540.3 457.5L540.4 460.9L540.5 461.8L540.6 464.0L540.8 462.0L540.9 471.2L541.0 470.0L541.1 464.6L541.2 470.2L541.3 467.6L541.5 461.9L541.6 463.7L541.7 468.0L541.8 473.3L541.9 461.1L542.0 457.9L542.1 459.7L542.3 471.2L542.4 459.1L542.5 463.3L542.6 469.7L542.7 468.2L542.8 477.2L542.9 473.1L543.1 461.9L543.2 472.1L543.3 453.6L543.4 468.9L543.5 464.3L543.6 469.2L543.7 465.7L543.9 470.0L544.0 464.2L544.1 470.2L544.2 466.6L544.3 462.7L544.4 462.4L544.5 463.7L544.7 467.4L544.8 471.1L544.9 459.6L545.0 469.4L545.1 473.8L545.2 470.7L545.3 466.4L545.5 469.8L545.6 466.8L545.7 474.1L545.8 458.8L545.9 474.9L546.0 467.2L546.1 467.0L546.3 480.2L546.4 463.1L546.5 466.3L546.6 462.5L546.7 476.5L546.8 468.5L546.9 475.3L547.1 486.7L547.2 479.8L547.3 464.9L547.4 475.5L547.5 463.2L547.6 471.1L547.7 474.1L547.9 480.9L548.0 484.5L548.1 462.5L548.2 470.3L548.3 462.1L548.4 469.6L548.5 480.8L548.7 466.2L548.8 473.9L548.9 480.5L549.0 474.2L549.1 479.8L549.2 471.0L549.3 467.2L549.5 491.5L549.6 464.0L549.7 474.9L549.8 463.4L549.9 474.5L550.0 469.2L550.1 468.8L550.3 475.5L550.4 480.0L550.5 471.8L550.6 476.6L550.7 474.6L550.8 468.1L550.9 473.4L551.1 476.4L551.2 479.0L551.3 483.6L551.4 475.3L551.5 469.4L551.6 479.0L551.7 476.9L551.9 479.5L552.0 479.0L552.1 481.7L552.2 482.7L552.3 473.8L552.4 486.2L552.5 481.5L552.7 483.4L552.8 480.9L552.9 482.2L553.0 476.7L553.1 485.1L553.2 466.3L553.3 484.9L553.5 476.3L553.6 480.6L553.7 481.1L553.8 482.1L553.9 476.3L554.0 483.4L554.1 478.7L554.3 475.9L554.4 480.4L554.5 480.8L554.6 476.6L554.7 487.4L554.8 477.4L554.9 483.6L555.1 480.8L555.2 469.1L555.3 488.1L555.4 475.0L555.5 475.9L555.6 494.1L555.7 484.5L555.9 486.0L556.0 488.5L556.1 484.8L556.2 476.6L556.3 493.3L556.4 491.8L556.5 481.5L556.7 479.4L556.8 490.3L556.9 481.8L557.0 489.8L557.1 481.7L557.2 485.2L557.3 495.1L557.5 493.9L557.6 496.3L557.7 490.8L557.8 491.5L557.9 489.1L558.0 499.3L558.1 480.8L558.3 499.1L558.4 495.3L558.5 488.6L558.6 477.7L558.7 495.8L558.8 482.6L558.9 491.5L559.1 491.2L559.2 489.4L559.3 484.8L559.4 497.2L559.5 502.4L559.6 485.6L559.7 510.2L559.9 498.5L560.0 504.2L560.1 499.9L560.2 498.4L560.3 497.2L560.4 512.7L560.6 504.9L560.7 505.3L560.8 501.7L560.9 505.9L561.0 506.9L561.1 517.1L561.2 519.9L561.4 509.4L561.5 500.7L561.6 523.8L561.7 522.0L561.8 512.0L561.9 512.9L562.0 528.8L562.2 509.9L562.3 536.6L562.4 523.6L562.5 525.7L562.6 542.3L562.7 525.8L562.8 546.3L563.0 535.8L563.1 536.8L563.2 548.7L563.3 532.8L563.4 540.0L563.5 552.0L563.6 535.4L563.8 526.4L563.9 534.6L564.0 545.9L564.1 542.2L564.2 543.5L564.3 548.7L564.4 544.6L564.6 540.1L564.7 554.4L564.8 552.7L564.9 544.1L565.0 542.9L565.1 556.5L565.2 539.2L565.4 554.5L565.5 537.3L565.6 534.3L565.7 556.5L565.8 551.3L565.9 547.2L566.0 556.5L566.2 551.9L566.3 547.9L566.4 547.5L566.5 556.5L566.6 556.4L566.7 556.5L566.8 554.0L567.0 553.2L567.1 542.8L567.2 556.5L567.3 556.5L567.4 556.5L567.5 556.5L567.6 556.5L567.8 552.7L567.9 556.5L568.0 553.8L568.1 556.5L568.2 554.6L568.3 556.5L568.4 550.2L568.6 556.5L568.7 545.6L568.8 542.5L568.9 556.5L569.0 556.5L569.1 556.5L569.2 556.5L569.4 556.5L569.5 556.5L569.6 556.5L569.7 554.3L569.8 556.0L569.9 556.5L570.0 552.9L570.2 556.5L570.3 556.5L570.4 556.5L570.5 556.5L570.6 551.9L570.7 551.6L570.8 546.2L571.0 556.5L571.1 556.5L571.2 550.4L571.3 552.9L571.4 556.5L571.5 556.5L571.6 556.5L571.8 555.1L571.9 556.5L572.0 551.3L572.1 541.2L572.2 556.5L572.3 556.5L572.4 556.5L572.6 555.7L572.7 542.5L572.8 556.5L572.9 556.5L573.0 556.5L573.1 556.5L573.2 556.5L573.4 550.0L573.5 556.5L573.6 556.1L573.7 554.0L573.8 556.5L573.9 556.5L574.0 548.5L574.2 556.5L574.3 556.5L574.4 555.7L574.5 554.4L574.6 544.3L574.7 553.2L574.8 556.5L575.0 538.3L575.1 541.8L575.2 539.0L575.3 542.2L575.4 548.3L575.5 544.5L575.6 543.2L575.8 535.8L575.9 547.7L576.0 543.8L576.1 538.6L576.2 531.8L576.3 527.6L576.4 537.8L576.6 535.5L576.7 535.9L576.8 541.5L576.9 537.1L577.0 513.4L577.1 528.3L577.2 526.5L577.4 533.7L577.5 519.4L577.6 527.7L577.7 530.8L577.8 515.6L577.9 530.8L578.0 525.1L578.2 520.7L578.3 509.3L578.4 515.8L578.5 512.0L578.6 517.9L578.7 515.9L578.8 516.0L579.0 516.6L579.1 510.1L579.2 516.0L579.3 502.3L579.4 514.9L579.5 515.3L579.7 510.3L579.8 511.7L579.9 508.8L580.0 499.8L580.1 495.8L580.2 511.3L580.3 495.3L580.5 495.5L580.6 497.8L580.7 469.0L580.8 487.5L580.9 494.8L581.0 490.2L581.1 484.6L581.3 487.8L581.4 486.0L581.5 498.7L581.6 491.2L581.7 491.6L581.8 496.5L581.9 484.7L582.1 490.0L582.2 487.6L582.3 491.7L582.4 489.8L582.5 494.5L582.6 489.2L582.7 494.0L582.9 483.1L583.0 495.4L583.1 485.9L583.2 482.9L583.3 488.2L583.4 484.0L583.5 485.1L583.7 481.1L583.8 486.5L583.9 482.0L584.0 485.2L584.1 487.1L584.2 479.0L584.3 480.0L584.5 484.7L584.6 482.2L584.7 474.7L584.8 485.7L584.9 489.8L585.0 477.9L585.1 490.5L585.3 484.2L585.4 492.4L585.5 477.2L585.6 476.2L585.7 481.3L585.8 483.0L585.9 474.9L586.1 469.2L586.2 480.0L586.3 483.5L586.4 476.1L586.5 481.5L586.6 478.3L586.7 469.9L586.9 475.7L587.0 482.8L587.1 482.0L587.2 483.4L587.3 483.4L587.4 476.6L587.5 477.2L587.7 481.8L587.8 488.6L587.9 487.9L588.0 473.6L588.1 477.6L588.2 479.2L588.3 480.3L588.5 475.7L588.6 486.5L588.7 487.3L588.8 480.4L588.9 482.5L589.0 489.1L589.1 473.2L589.3 472.3L589.4 475.5L589.5 485.6L589.6 481.4L589.7 481.2L589.8 471.2L589.9 487.1L590.1 479.1L590.2 488.7L590.3 477.2L590.4 479.2L590.5 477.0L590.6 487.0L590.7 482.7L590.9 479.5L591.0 479.5L591.1 467.8L591.2 478.3L591.3 475.2L591.4 462.2L591.5 483.3L591.7 477.3L591.8 477.5L591.9 473.3L592.0 481.0L592.1 475.0L592.2 470.9L592.3 470.7L592.5 476.2L592.6 479.0L592.7 486.2L592.8 470.7L592.9 471.0L593.0 479.7L593.1 473.3L593.3 469.9L593.4 473.1L593.5 470.9L593.6 477.7L593.7 470.5L593.8 474.3L593.9 467.5L594.1 473.6L594.2 462.5L594.3 473.7L594.4 474.3L594.5 471.2L594.6 467.6L594.7 464.7L594.9 472.8L595.0 475.4L595.1 467.2L595.2 466.4L595.3 464.0L595.4 467.5L595.5 460.8L595.7 467.8L595.8 464.2L595.9 461.0L596.0 463.1L596.1 464.3L596.2 458.2L596.3 461.9L596.5 473.3L596.6 462.7L596.7 463.1L596.8 462.9L596.9 462.8L597.0 459.4L597.1 467.6L597.3 457.4L597.4 453.9L597.5 465.0L597.6 463.6L597.7 459.2L597.8 465.4L597.9 461.9L598.1 459.5L598.2 459.3L598.3 459.0L598.4 470.7L598.5 465.4L598.6 460.1L598.8 467.6L598.9 456.5L599.0 468.6L599.1 465.4L599.2 461.3L599.3 457.7L599.4 460.6L599.6 454.5L599.7 457.7L599.8 466.3L599.9 457.4L600.0 454.5L600.1 462.7L600.2 457.2L600.4 465.8L600.5 459.5L600.6 456.1L600.7 460.3L600.8 455.3L600.9 453.8L601.0 461.9L601.2 454.9L601.3 459.6L601.4 463.9L601.5 460.0L601.6 458.8L601.7 452.4L601.8 460.7L602.0 464.5L602.1 456.4L602.2 450.3L602.3 454.0L602.4 456.5L602.5 452.0L602.6 452.0L602.8 448.0L602.9 458.1L603.0 454.3L603.1 452.5L603.2 454.7L603.3 452.8L603.4 456.3L603.6 456.4L603.7 459.1L603.8 437.9L603.9 453.9L604.0 454.3L604.1 455.0L604.2 450.6L604.4 452.8L604.5 452.9L604.6 450.0L604.7 449.5L604.8 456.7L604.9 451.9L605.0 450.3L605.2 459.5L605.3 457.5L605.4 452.3L605.5 454.0L605.6 448.6L605.7 452.3L605.8 446.7L606.0 457.9L606.1 452.4L606.2 452.9L606.3 449.9L606.4 445.1L606.5 459.9L606.6 454.4L606.8 449.7L606.9 455.2L607.0 448.0L607.1 452.5L607.2 455.5L607.3 448.6L607.4 456.7L607.6 450.3L607.7 447.6L607.8 454.7L607.9 454.6L608.0 452.1L608.1 454.3L608.2 453.5L608.4 456.5L608.5 449.5L608.6 452.1L608.7 446.8L608.8 447.0L608.9 448.5L609.0 451.3L609.2 459.6L609.3 452.5L609.4 451.1L609.5 446.5L609.6 452.1L609.7 472.8L609.8 459.0L610.0 452.7L610.1 456.8L610.2 452.8L610.3 456.0L610.4 459.3L610.5 454.1L610.6 459.0L610.8 454.4L610.9 449.3L611.0 460.0L611.1 460.1L611.2 456.7L611.3 448.4L611.4 458.4L611.6 450.9L611.7 455.1L611.8 456.2L611.9 466.8L612.0 446.5L612.1 459.4L612.2 455.7L612.4 454.5L612.5 451.9L612.6 463.0L612.7 463.1L612.8 460.0L612.9 456.8L613.0 458.4L613.2 454.2L613.3 456.4L613.4 456.7L613.5 463.2L613.6 456.8L613.7 454.9L613.8 449.7L614.0 452.1L614.1 455.4L614.2 452.0L614.3 454.9L614.4 458.1L614.5 454.9L614.6 456.4L614.8 465.5L614.9 462.9L615.0 463.0L615.1 462.7L615.2 456.1L615.3 462.8L615.4 469.1L615.6 458.7L615.7 459.7L615.8 468.5L615.9 467.0L616.0 460.5L616.1 468.7L616.2 465.3L616.4 459.0L616.5 459.4L616.6 467.1L616.7 465.6L616.8 454.1L616.9 456.5L617.0 466.7L617.2 461.4L617.3 460.2L617.4 455.7L617.5 458.0L617.6 460.9L617.7 471.3L617.9 461.8L618.0 465.6L618.1 461.1L618.2 472.4L618.3 461.0L618.4 465.8L618.5 459.6L618.7 467.7L618.8 456.3L618.9 466.0L619.0 466.9L619.1 463.2L619.2 466.0L619.3 465.4L619.5 472.7L619.6 462.4L619.7 470.0L619.8 455.3L619.9 464.8L620.0 462.7L620.1 462.7L620.3 462.4L620.4 463.3L620.5 457.4L620.6 459.2L620.7 466.1L620.8 460.7L620.9 473.3L621.1 467.4L621.2 463.5L621.3 454.3L621.4 463.8L621.5 465.1L621.6 462.8L621.7 466.6L621.9 455.6L622.0 455.3L622.1 455.8L622.2 457.7L622.3 462.4L622.4 461.3L622.5 454.7L622.7 453.3L622.8 453.6L622.9 459.9L623.0 462.8L623.1 461.8L623.2 453.8L623.3 448.7L623.5 453.2L623.6 457.2L623.7 449.5L623.8 459.8L623.9 459.9L624.0 456.7L624.1 462.4L624.3 457.9L624.4 449.9L624.5 461.9L624.6 457.8L624.7 461.3L624.8 454.3L624.9 453.4L625.1 460.7L625.2 457.6L625.3 459.1L625.4 458.7L625.5 454.1L625.6 446.9L625.7 457.4L625.9 457.7L626.0 456.9L626.1 457.0L626.2 453.6L626.3 458.5L626.4 460.2L626.5 452.6L626.7 467.5L626.8 440.3L626.9 463.4L627.0 454.0"/>
<path d="M315.5 424.5V557 M317.5 465V557 M567.5 424.5V557 M573.5 459V557 M566.5 455V557" stroke-width="1" stroke="#1a1a1a" shape-rendering="crispEdges"/>
</g>
</defs>
<use href="#pf"/>
<use href="#sgmain"/>
<use href="#trmain"/>
<use href="#axl"/>
<path d="M516.6 492.6 L540.9 507.6 L533.2 512.6 L543.3 529 L536.6 533.8 L526.2 518 L517.2 521.4 Z" fill="url(#curg)" stroke="#161616" stroke-width="4" stroke-linejoin="round"/>
<path d="M519.6 497.6 L523.6 504.2 M520.2 502.6 L524 505 L524.6 500.4 M519.6 499.8 L522.6 499.2" fill="none" stroke="#222" stroke-width="1.3" stroke-linecap="round"/>
</svg>
<span class="t" style="left:202.00px;top:663.50px;font-size:13px;color:#222;letter-spacing:0.618px;">2012-12-04 12:00 to 24:00</span>
<svg style="left:8px;top:74px;overflow:hidden" width="920" height="99" viewBox="8 74 920 99"><g transform="translate(12,76) scale(0.17326) translate(-202,-200)"><use href="#pf" stroke="#505050" stroke-width="1.7"/><use href="#sgbase"/><polyline points="284,324 335,295 387,261 414,251" fill="none" stroke="#88f81c" stroke-width="4" opacity="0.85" stroke-linejoin="round"/><polyline points="428,251 473,282 531,306 576,289 627,266" fill="none" stroke="#88f81c" stroke-width="4" opacity="0.85" stroke-linejoin="round"/><path d="M418 314 L394 377 L442 377 Z" fill="#a0f818" opacity=".6"/><rect x="414" y="327" width="8" height="50" fill="#d8fc00" opacity="0.7"/><rect x="407" y="342" width="21" height="10" fill="#ffe000" opacity="0.9"/><rect x="413" y="344" width="10" height="5" fill="#ff9000" opacity="0.8"/><path d="M284 534L285 543L285 546L286 549L287 552L287 543L288 543L289 546L289 530L290 533L291 537L291 541L292 536L293 531L293 531L294 529L295 535L295 553L296 546L297 545L297 534L298 551L299 550L299 556L300 556L301 544L301 552L302 540L303 541L303 545L304 532L304 523L305 534L306 537L306 529L307 518L308 521L308 519L309 520L310 514L310 527L311 515L312 524L312 518L313 512L314 518L314 523L315 509L316 492L316 504L317 511L318 511L318 511L319 491L320 492L320 495L321 484L322 499L322 478L323 479L324 485L324 489L325 483L326 485L326 490L327 488L328 488L328 489L329 480L330 475L330 481L331 473L332 484L332 485L333 485L334 485L334 476L335 475L336 476L336 490L337 485L338 468L338 480L339 484L340 495L340 499L341 488L341 478L342 488L343 495L343 485L344 478L345 487L345 479L346 488L347 483L347 501L348 502L349 496L349 495L350 516L351 509L351 502L352 503L353 509L353 521L354 532L355 531L355 517L356 528L357 531L357 532M369 505L369 510L370 500L371 488L371 498L372 498L373 494L373 492L374 473L375 469L375 471L376 470L377 478L377 476L378 469L379 466L379 471L380 468L380 471L381 456L382 480L382 494L383 474L384 470L384 474L385 471L386 474L386 491L387 480L388 483L388 484L389 494L390 488L390 487L391 472L392 495L392 489L393 492L394 499L394 498L395 488L396 501L396 498L397 498L398 504L398 499L399 496L400 501L400 498L401 508L402 499L402 509L403 505L404 501L404 514L405 493L406 499L406 508L407 491L408 518L408 509L409 501L410 509L410 505L411 513L412 513L412 512L413 510L414 518L414 515L415 509L416 514L416 516L417 520L417 507L418 516L419 517L419 516L420 514L421 512L421 514L422 514L423 514L423 509L424 528L425 513L425 515L426 503L427 518L427 524L428 524L429 517L429 520L430 520L431 517L431 513L432 521L433 516L433 510L434 523L435 528L435 522L436 546L437 534L437 518L438 516L439 529L439 507L440 523L441 526L441 524L442 516L443 533L443 532L444 523L445 519L445 540L446 517L447 519L447 527L448 533L449 518L449 524L450 523L451 532L451 530L452 522L453 539L453 537L454 523L455 518L455 517L456 516L456 516L457 526L458 526L458 530L459 542L460 520L460 520L461 534L462 528L462 529L463 530L464 525L464 549L465 522L466 533L466 527L467 531L468 532L468 522L469 526L470 526L470 529L471 531L472 539L472 545L473 533L474 551L474 527L475 536L476 530L476 521L477 530L478 528L478 529L479 533L480 540L480 537L481 536L482 517L482 538L483 513L484 519L484 528L485 529L486 527L486 525L487 541L488 532L488 528L489 538L490 532L490 532L491 520L492 528L492 518L493 522L494 520L494 535L495 532L495 524L496 521L497 531L497 521L498 526L499 528L499 525L500 529L501 530L501 539L502 528L503 521L503 523L504 518L505 530L505 523L506 524L507 521L507 528L508 533L509 533L509 536L510 533L511 529L511 535L512 526L513 523L513 518L514 520L515 527L515 522L516 524L517 533L517 532L518 525L519 536L519 521L520 534L521 524L521 522L522 519L523 522L523 519L524 524L525 532L525 526L526 526L527 527L527 531L528 520L529 522L529 522L530 522L531 526L531 523L532 513L532 525L533 523L534 517L534 523L535 528L536 518L536 518L537 523L538 528L538 529L539 516L540 525L540 519L541 513L542 536L542 514L543 489L544 526L544 527L545 520L546 555L546 518L547 528L548 500L548 515L549 520L550 507L550 520L551 510L552 518L552 505L553 517L554 516L554 504L555 507L556 515L556 514L557 504L558 517L558 491L559 515L560 511L560 504L561 511L562 514L562 511L563 500L564 503L564 509L565 518L566 484L566 494L567 509L568 500L568 515L569 519L570 504L570 509L571 507L571 493L572 507L573 505L573 495L574 506L575 491L575 494L576 505L577 504L577 496L578 491L579 491L579 503L580 498L581 498L581 493L582 517L583 498L583 486L584 489L585 494L585 509L586 492L587 493L587 491L588 495L589 484L589 481L590 502L591 489L591 487L592 501L593 485L593 492L594 483L595 488L595 491L596 478L597 492L597 485L598 475L599 477L599 494L600 485L601 490L601 475L602 477L603 489L603 489L604 487L605 484L605 483L606 480L607 477L607 471L608 485L608 480L609 489L610 487L610 485L611 476L612 493L612 487L613 476L614 487L614 487L615 490L616 469L616 472L617 481L618 480L618 478L619 473L620 485L620 484L621 472L622 474L622 477L623 483L624 470L624 484L625 472L626 463L626 470L627 468" fill="none" stroke="#000" stroke-width="1.7"/></g><g transform="translate(112,76) scale(0.17326) translate(-202,-200)"><use href="#pf" stroke="#505050" stroke-width="1.7"/><use href="#sgbase"/><polyline points="284,251 301,270 318,289" fill="none" stroke="#88f81c" stroke-width="3" opacity="0.6" stroke-linejoin="round"/><polyline points="342,251 387,289 428,314 456,327 490,311 531,282 558,251" fill="none" stroke="#88f81c" stroke-width="4" opacity="0.85" stroke-linejoin="round"/><path d="M332 301 L315 377 L349 377 Z" fill="#a0f818" opacity=".6"/><rect x="328" y="314" width="8" height="63" fill="#d8fc00" opacity="0.7"/><rect x="322" y="347" width="21" height="10" fill="#ffe000" opacity="0.9"/><rect x="327" y="349" width="10" height="5" fill="#ff9000" opacity="0.8"/><path d="M593 308 L576 377 L610 377 Z" fill="#a0f818" opacity=".6"/><rect x="589" y="320" width="8" height="57" fill="#d8fc00" opacity="0.7"/><rect x="582" y="347" width="21" height="10" fill="#ffe000" opacity="0.9"/><rect x="588" y="349" width="10" height="5" fill="#ff9000" opacity="0.8"/><rect x="294" y="347" width="10" height="8" fill="#ffe000" opacity="0.8"/><path d="M284 473L285 471L285 475L286 476L287 482L287 485L288 470L289 477L289 481L290 482L291 484L291 489L292 486L293 490L293 500L294 484L295 510L295 472L296 498L297 485L297 493L298 490L299 501L299 498L300 489L301 488L301 512L302 500L303 495L303 496L304 509L304 519L305 511L306 509L306 510M326 515L326 503L327 517L328 527L328 520L329 501L330 515L330 491L331 501L332 485L332 491L333 503L334 503L334 493L335 485L336 489L336 490L337 489L338 489L338 496L339 489L340 488L340 480L341 481L341 475L342 472L343 481L343 478L344 482L345 480L345 464L346 488L347 494L347 487L348 488L349 482L349 476L350 483L351 473L351 491L352 484L353 483L353 494L354 491L355 494L355 482L356 500L357 486L357 487L358 492L359 498L359 490L360 509L361 487L361 505L362 491L363 495L363 488L364 492L365 508L365 507L366 486L367 499L367 508L368 500L369 501L369 505L370 508L371 519L371 507L372 504L373 516L373 514L374 514L375 516L375 507L376 520L377 528L377 518L378 507L379 520L379 518L380 513L380 522L381 519L382 519L382 529L383 513L384 512L384 518L385 527L386 535L386 520L387 516L388 524L388 516L389 522L390 526L390 534L391 526L392 535L392 529L393 527L394 533L394 550L395 545L396 543L396 534L397 538L398 530L398 536L399 537L400 540L400 545L401 533L402 538L402 532L403 532L404 538L404 530L405 539L406 554L406 528L407 540L408 540L408 531L409 541L410 540L410 545L411 549L412 540L412 548L413 539L414 547L414 549L415 543L416 535L416 554L417 537L417 543L418 543L419 553L419 535L420 554L421 551L421 544L422 556L423 539L423 546L424 556L425 556L425 551L426 542L427 533L427 535L428 542L429 530L429 553L430 545L431 550L431 552L432 552L433 538L433 547L434 549L435 536L435 534L436 531L437 544L437 507L438 533L439 534L439 551L440 548L441 544L441 541L442 531L443 544L443 539L444 543L445 535L445 533L446 538L447 529L447 520L448 527L449 532L449 531L450 525L451 527L451 538L452 540L453 530L453 536L454 530L455 526L455 527L456 530L456 533L457 527L458 536L458 529L459 516L460 524L460 526L461 530L462 528L462 529L463 521L464 544L464 504L465 505L466 533L466 525L467 531L468 510L468 521L469 533L470 501L470 522L471 523L472 509L472 511L473 517L474 518L474 522L475 508L476 514L476 523L477 528L478 510L478 516L479 511L480 526L480 529L481 512L482 509L482 514L483 511L484 511L484 511L485 516L486 520L486 520L487 508L488 523L488 518L489 511L490 528L490 509L491 521L492 513L492 516L493 530L494 524L494 507L495 531L495 519L496 519L497 517L497 526L498 511L499 512L499 525L500 510L501 521L501 523L502 514L503 520L503 515L504 519L505 528L505 519L506 533L507 521L507 524L508 514L509 516L509 515L510 530L511 521L511 509L512 524L513 510L513 517L514 531L515 526L515 524L516 518L517 526L517 522L518 523L519 512L519 532L520 518L521 516L521 526L522 502L523 520L523 525L524 501L525 522L525 510L526 491L527 514L527 513L528 503L529 511L529 525L530 515L531 511L531 503L532 522L532 507L533 500L534 496L534 518L535 493L536 514L536 502L537 508L538 512L538 515L539 501L540 500L540 515L541 497L542 484L542 482L543 500L544 494L544 482L545 501L546 492L546 483L547 494L548 484L548 484L549 485L550 478L550 477L551 484L552 497L552 499L553 491L554 494L554 492L555 496L556 508L556 500L557 502L558 499L558 511L559 514L560 510L560 531L561 525L562 528L562 556L563 556L564 554L564 556L565 539M585 511L586 504L587 503L587 493L588 495L589 509L589 495L590 499L591 483L591 493L592 491L593 489L593 496L594 489L595 488L595 505L596 467L597 485L597 496L598 477L599 485L599 514L600 509L601 488L601 501L602 482L603 484L603 491L604 485L605 484L605 506L606 482L607 473L607 488L608 475L608 476L609 472L610 493L610 473L611 482L612 461L612 461L613 476L614 476L614 476L615 466L616 477L616 466L617 459L618 465L618 471L619 470L620 451L620 466L621 466L622 464L622 465L623 464L624 440L624 470L625 464L626 465L626 467L627 455" fill="none" stroke="#000" stroke-width="1.7"/></g><g transform="translate(212,76) scale(0.17326) translate(-202,-200)"><use href="#pf" stroke="#505050" stroke-width="1.7"/><use href="#sgbase"/><rect x="284" y="251" width="161" height="126" fill="#40f040" opacity="0.45"/><polyline points="456,264 473,327 490,377" fill="none" stroke="#88f81c" stroke-width="3" opacity="0.5" stroke-linejoin="round"/><polyline points="497,251 510,314 524,364" fill="none" stroke="#88f81c" stroke-width="3" opacity="0.5" stroke-linejoin="round"/><rect x="301" y="346" width="120" height="6" fill="#e0fc00" opacity="0.45"/><rect x="318" y="364" width="120" height="6" fill="#e0fc00" opacity="0.5"/><rect x="490" y="347" width="27" height="5" fill="#e8fc00" opacity="0.7"/><rect x="536" y="251" width="86" height="126" fill="#ffd000" opacity="0.95"/><rect x="538" y="251" width="14" height="126" fill="#e8f400" opacity="0.9"/><rect x="572" y="251" width="14" height="88" fill="#f4f000" opacity="0.9"/><rect x="603" y="251" width="10" height="126" fill="#e0f800" opacity="0.8"/><rect x="536" y="337" width="86" height="40" fill="#ff8a00" opacity="0.85"/><rect x="545" y="349" width="77" height="8" fill="#ff4000" opacity="0.8"/><rect x="538" y="364" width="72" height="6" fill="#ff5000" opacity="0.7"/><path d="M284 464L285 463L285 451L286 464L287 470L287 459L288 467L289 469L289 481L290 471L291 477L291 472L292 478L293 475L293 479L294 479L295 473L295 495L296 481L297 473L297 479L298 481L299 468L299 498L300 474L301 489L301 490L302 492L303 488L303 503L304 509L304 493L305 476L306 495L306 487L307 495L308 496L308 493L309 489L310 492L310 500L311 501L312 486L312 492L313 518L314 500L314 502L315 508L316 500L316 486L317 498L318 502L318 507L319 505L320 522L320 508L321 509L322 502L322 528L323 504L324 483L324 515L325 511L326 521L326 518L327 507L328 513L328 511L329 512L330 515L330 520L331 515L332 511L332 516L333 515L334 518L334 518L335 520L336 512L336 523L337 522L338 522L338 524L339 522L340 511L340 535L341 525L341 527L342 526L343 526L343 520L344 536L345 521L345 521L346 523L347 515L347 525L348 513L349 528L349 522L350 522L351 524L351 513L352 532L353 530L353 521L354 515L355 518L355 517L356 513L357 520L357 523L358 528L359 520L359 519L360 512L361 520L361 521L362 530L363 534L363 532L364 516L365 529L365 527L366 527L367 528L367 529L368 525L369 509L369 519L370 524L371 520L371 529L372 520L373 522L373 519L374 528L375 529L375 527L376 532L377 523L377 518L378 511L379 520L379 526L380 521L380 512L381 523L382 529L382 515L383 533L384 510L384 527L385 511L386 503L386 514L387 515L388 513L388 515L389 512L390 511L390 512L391 520L392 510L392 514L393 511L394 510L394 513L395 508L396 508L396 517L397 503L398 509L398 513L399 509L400 515L400 504L401 504L402 492L402 495L403 520L404 516L404 515L405 512L406 516L406 519L407 496L408 511L408 519L409 510L410 502L410 504L411 498L412 499L412 508L413 501L414 503L414 511L415 501L416 510L416 510L417 505L417 488L418 495L419 494L419 494L420 492L421 495L421 486L422 482L423 489L423 478L424 494L425 494L425 486L426 479L427 485L427 483L428 496L429 471L429 474L430 484L431 475L431 491L432 482L433 466L433 474L434 462L435 466L435 468L436 455L437 475L437 466L438 478L439 461L439 449L440 463L441 452L441 456L442 439L443 445L443 456L444 451L445 455L445 447L446 446L447 453L447 447L448 451L449 454L449 456L450 450L451 463L451 441L452 441L453 442L453 447L454 425L455 457L455 445L456 454L456 444L457 451L458 458L458 442L459 438L460 447L460 448L461 447L462 448L462 447L463 446L464 449L464 452L465 447L466 449L466 464L467 449L468 455L468 449L469 450L470 449L470 455L471 455L472 463L472 478L473 460L474 469L474 476L475 462L476 477L476 471L477 480L478 489L478 492L479 490L480 501L480 522L481 515L482 515M497 502L498 501L499 491L499 458L500 460L501 462L501 461L502 457L503 453L503 454L504 465L505 443L505 465L506 460L507 454L507 466L508 464L509 457L509 453L510 462L511 452L511 458L512 456L513 436L513 448L514 447L515 446L515 449L516 447L517 445L517 441L518 453L519 433L519 445L520 435L521 463L521 436L522 432L523 432L523 451L524 442L525 441L525 440L526 439L527 445L527 432L528 427L529 442L529 430L530 449L531 438L531 446L532 443L532 443L533 451L534 444L534 448L535 459L536 441L536 437L537 443L538 451L538 452L539 443L540 453L540 442L541 444L542 457L542 454L543 440L544 454L544 460L545 458L546 451L546 457L547 449L548 443L548 446L549 450L550 458L550 447L551 453L552 445L552 454L553 451L554 452L554 449L555 454L556 451L556 451L557 449L558 456L558 462L559 448L560 447L560 465L561 444L562 455L562 446L563 451L564 435L564 468L565 445L566 458L566 450L567 445L568 459L568 476L569 454L570 440L570 454L571 459L571 464L572 452L573 464L573 452L574 450L575 453L575 465L576 449L577 459L577 456L578 458L579 458L579 467L580 453L581 457L581 465L582 453L583 466L583 454L584 455L585 457L585 459L586 459L587 454L587 452L588 459L589 455L589 468L590 463L591 457L591 461L592 473L593 465L593 465L594 458L595 468L595 457L596 464L597 461L597 466L598 460L599 467L599 481L600 461L601 479L601 481L602 465L603 457L603 463L604 475L605 466L605 463L606 484L607 471L607 474L608 470L608 469L609 443L610 468L610 459L611 467L612 467L612 469L613 456L614 470L614 475L615 476L616 481L616 462L617 465L618 470L618 462L619 471L620 466L620 468L621 460L622 473L622 473L623 473L624 458L624 463L625 465L626 480L626 456L627 470" fill="none" stroke="#000" stroke-width="1.7"/></g><g transform="translate(312,76) scale(0.17326) translate(-202,-200)"><use href="#pf" stroke="#505050" stroke-width="1.7"/><use href="#sgbase"/><rect x="284" y="251" width="48" height="126" fill="#70f428" opacity="0.7"/><rect x="334" y="251" width="3" height="126" fill="#e8fc00" opacity="0.9"/><rect x="291" y="251" width="5" height="126" fill="#c8fa10" opacity="0.7"/><rect x="284" y="344" width="48" height="8" fill="#ffb000" opacity="0.9"/><rect x="284" y="354" width="41" height="5" fill="#ff7000" opacity="0.7"/><rect x="284" y="367" width="51" height="10" fill="#ffe000" opacity="0.7"/><rect x="342" y="276" width="27" height="5" fill="#e8fc00" opacity="0.7"/><rect x="404" y="349" width="24" height="5" fill="#e8fc00" opacity="0.7"/><rect x="380" y="346" width="10" height="4" fill="#e0fc00" opacity="0.7"/><polyline points="353,251 387,289 407,339 414,377" fill="none" stroke="#88f81c" stroke-width="3" opacity="0.5" stroke-linejoin="round"/><polyline points="421,251 456,289 490,352 497,377" fill="none" stroke="#88f81c" stroke-width="3" opacity="0.5" stroke-linejoin="round"/><polyline points="610,257 586,301 565,352 558,377" fill="none" stroke="#88f81c" stroke-width="3" opacity="0.5" stroke-linejoin="round"/><rect x="517" y="308" width="62" height="63" fill="#20f040" opacity="0.45"/><path d="M284 451L285 456L285 452L286 449L287 455L287 453L288 454L289 460L289 460L290 468L291 453L291 455L292 470L293 459L293 481L294 470L295 473L295 456L296 464L297 470L297 462L298 471L299 478L299 468L300 468L301 468L301 471L302 468L303 462L303 460L304 455L304 464L305 461L306 469L306 469L307 468L308 463L308 483L309 451L310 470L310 461L311 464L312 465L312 471L313 470L314 472L314 471L315 475L316 469L316 469L317 486L318 471L318 487L319 468L320 461L320 474L321 475L322 478L322 470L323 472L324 488L324 481L325 494L326 473L326 460L327 481L328 474L328 473L329 473L330 476L330 472L331 458L332 473L332 471L333 467L334 467L334 467L335 478L336 475L336 473L337 468L338 473L338 461L339 475L340 476L340 473L341 461L341 482L342 465L343 473L343 473L344 469L345 482L345 480L346 456L347 478L347 469L348 459L349 468L349 464L350 470L351 479L351 463L352 476L353 466L353 475L354 458L355 467L355 469L356 468L357 457L357 468L358 463L359 459L359 475L360 453L361 477L361 445L362 454L363 466L363 451L364 460L365 453L365 457L366 459L367 463L367 453L368 469L369 458L369 451L370 456L371 464L371 451L372 457L373 448L373 452L374 443L375 443L375 449L376 458L377 456L377 455L378 452L379 461L379 453L380 460L380 463L381 464L382 462L382 461L383 461L384 470L384 468L385 467L386 471L386 483L387 477L388 483L388 481L389 492L390 508L390 495L391 496L392 496M410 498L411 513L412 492L412 491L413 498L414 489L414 492L415 485L416 473L416 478L417 473L417 476L418 467L419 467L419 461L420 460L421 471L421 461L422 478L423 456L423 461L424 472L425 464L425 471L426 461L427 460L427 457L428 468L429 443L429 449L430 447L431 460L431 451L432 454L433 449L433 470L434 451L435 438L435 446L436 447L437 449L437 456L438 454L439 458L439 464L440 445L441 455L441 460L442 444L443 463L443 446L444 465L445 466L445 460L446 474L447 457L447 457L448 473L449 464L449 472L450 469L451 473L451 474L452 484L453 480L453 485L454 471L455 469L455 481L456 486L456 472L457 471L458 489L458 494L459 489L460 490L460 501L461 483L462 495L462 487L463 504L464 498L464 503L465 497L466 506L466 508L467 506L468 494L468 507L469 504L470 508L470 511L471 511L472 509L472 513L473 510L474 494L474 526L475 514L476 515L476 531L477 510L478 531L478 526L479 515L480 525L480 517L481 525L482 517L482 529L483 515L484 541L484 523L485 525L486 540L486 526L487 528L488 535L488 536L489 528L490 542L490 519L491 530L492 526L492 530L493 538L494 539L494 544L495 549L495 533L496 536L497 527L497 526L498 526L499 550L499 539L500 539L501 519L501 525L502 528L503 542L503 534L504 525L505 529L505 535L506 543L507 537L507 547L508 522L509 541L509 539L510 529L511 541L511 547L512 531L513 545L513 535L514 543L515 537L515 532L516 539L517 533L517 546L518 534L519 547L519 532L520 538L521 547L521 529L522 538L523 540L523 534L524 529L525 521L525 556L526 545L527 541L527 525L528 540L529 535L529 538L530 542L531 543L531 514L532 532L532 518L533 544L534 530L534 534L535 526L536 531L536 534L537 532L538 532L538 525L539 549L540 522L540 526L541 532L542 521L542 542L543 533L544 528L544 537L545 515L546 535L546 531L547 530L548 521L548 521L549 519L550 521L550 533L551 531L552 518L552 524L553 522L554 522L554 512L555 522L556 521L556 551L557 523L558 516L558 523L559 516L560 515L560 511L561 524L562 520L562 523L563 515L564 522L564 504L565 512L566 504L566 509L567 517L568 500L568 508L569 501L570 495L570 510L571 495L571 504L572 506L573 508L573 521L574 493L575 501L575 495L576 497L577 479L577 495L578 489L579 496L579 486L580 488L581 489L581 488L582 508L583 497L583 481L584 491L585 487L585 495L586 493L587 495L587 500L588 494L589 497L589 501L590 505L591 503L591 510L592 504L593 501L593 511L594 523L595 510L595 523L596 528L597 514L597 518L598 510L599 520L599 507L600 507L601 518L601 513L602 523L603 505L603 510L604 509L605 541L605 499L606 495L607 513L607 509L608 490L608 496L609 493L610 490L610 498L611 495L612 499L612 490L613 482L614 483L614 473L615 482L616 479L616 474L617 465L618 478L618 481L619 474L620 469L620 467L621 464L622 496L622 467L623 458L624 450L624 441L625 457L626 439L626 441L627 448" fill="none" stroke="#000" stroke-width="1.7"/></g><g transform="translate(412,76) scale(0.17326) translate(-202,-200)"><use href="#pf" stroke="#505050" stroke-width="1.7"/><use href="#sgbase"/><polyline points="346,251 366,282 394,308 428,320 456,329 490,314 524,295 552,270 576,251" fill="none" stroke="#88f81c" stroke-width="4" opacity="0.85" stroke-linejoin="round"/><polyline points="593,251 610,289" fill="none" stroke="#88f81c" stroke-width="3" opacity="0.6" stroke-linejoin="round"/><path d="M325 308 L308 377 L342 377 Z" fill="#a0f818" opacity=".6"/><rect x="321" y="320" width="8" height="57" fill="#d8fc00" opacity="0.7"/><rect x="315" y="344" width="21" height="10" fill="#ffe000" opacity="0.9"/><rect x="320" y="347" width="10" height="5" fill="#ff9000" opacity="0.8"/><path d="M582 301 L569 377 L596 377 Z" fill="#a0f818" opacity=".6"/><rect x="578" y="314" width="8" height="63" fill="#d8fc00" opacity="0.7"/><rect x="572" y="347" width="21" height="10" fill="#ffe000" opacity="0.9"/><rect x="577" y="349" width="10" height="5" fill="#ff9000" opacity="0.8"/><rect x="552" y="352" width="10" height="8" fill="#ffe000" opacity="0.8"/><path d="M284 453L285 461L285 468L286 459L287 464L287 468L288 465L289 476L289 469L290 469L291 475L291 459L292 466L293 466L293 462L294 470L295 469L295 476L296 475L297 463L297 473L298 492L299 479L299 473L300 479L301 463L301 490L302 493L303 498L303 498L304 495L304 505L305 491L306 506L306 501L307 507L308 516L308 525L309 516L310 526" fill="none" stroke="#000" stroke-width="1.7"/></g><g transform="translate(512,76) scale(0.17326) translate(-202,-200)"><use href="#pf" stroke="#505050" stroke-width="1.7"/><use href="#sgbase"/><polyline points="284,270 318,301 353,320 387,333 414,327" fill="none" stroke="#88f81c" stroke-width="3.5" opacity="0.7" stroke-linejoin="round"/><polyline points="414,327 449,289 476,261 497,251" fill="none" stroke="#88f81c" stroke-width="3.5" opacity="0.7" stroke-linejoin="round"/><polyline points="504,251 531,289 565,327 593,358" fill="none" stroke="#88f81c" stroke-width="3.5" opacity="0.7" stroke-linejoin="round"/><rect x="495" y="289" width="5" height="88" fill="#e0fc00" opacity="0.85"/><rect x="490" y="327" width="15" height="50" fill="#a0f818" opacity="0.5"/><rect x="353" y="314" width="69" height="32" fill="#40f040" opacity="0.4"/></g><g transform="translate(612,76) scale(0.17326) translate(-202,-200)"><use href="#pf" stroke="#505050" stroke-width="1.7"/><use href="#sgbase"/><polyline points="284,329 318,314 353,291 387,266 407,251" fill="none" stroke="#88f81c" stroke-width="4" opacity="0.85" stroke-linejoin="round"/><polyline points="586,289 603,270 620,251" fill="none" stroke="#88f81c" stroke-width="3" opacity="0.7" stroke-linejoin="round"/><rect x="433" y="250" width="21" height="129" fill="#ffffff" opacity="1"/><rect x="461" y="251" width="5" height="126" fill="#d8fc00" opacity="0.8"/><rect x="562" y="251" width="5" height="126" fill="#d8fc00" opacity="0.8"/><rect x="466" y="301" width="96" height="76" fill="#30f048" opacity="0.5"/><rect x="473" y="349" width="86" height="8" fill="#ffe000" opacity="0.9"/><rect x="476" y="352" width="14" height="5" fill="#ff5000" opacity="0.85"/><rect x="462" y="368" width="113" height="6" fill="#f0f800" opacity="0.8"/><rect x="370" y="344" width="58" height="5" fill="#e0fc00" opacity="0.7"/><rect x="476" y="259" width="7" height="55" fill="#b0f810" opacity="0.6"/><path d="M284 539L285 556L285 554L286 533L287 546L287 556L288 536L289 542L289 537L290 554L291 549L291 548L292 547L293 552L293 546L294 549L295 550L295 551L296 541L297 546L297 546L298 533L299 532L299 530L300 534L301 537L301 532L302 538L303 525L303 525L304 528L304 524L305 524L306 519L306 527L307 515L308 521L308 528L309 507L310 515L310 529L311 524L312 516L312 530L313 513L314 516L314 522L315 521L316 507L316 509L317 505L318 511L318 507L319 511L320 495L320 514L321 499L322 499L322 514L323 499L324 487L324 500L325 496L326 491L326 498L327 499L328 490L328 501L329 492L330 493L330 488L331 483L332 488L332 498L333 484L334 484L334 499L335 471L336 486L336 488L337 486L338 483L338 487L339 483L340 491L340 481L341 490L341 483L342 491L343 482L343 491L344 483L345 490L345 486L346 479L347 485L347 484L348 494L349 484L349 486L350 472L351 473L351 476L352 473L353 479L353 470L354 470L355 483L355 464L356 457L357 475L357 472L358 451L359 472L359 465L360 478L361 476L361 469L362 469L363 471L363 467L364 462L365 458L365 458L366 473L367 461L367 460L368 452L369 457L369 455L370 448L371 457L371 455L372 458L373 454L373 453L374 449L375 449L375 453L376 450L377 458L377 458L378 469L379 463L379 465L380 469L380 482L381 472L382 469L382 460L383 474L384 469L384 471L385 466L386 490L386 489L387 505L388 496L388 495L389 516L390 511L390 517L391 522L392 511L392 522L393 527L394 533L394 536L395 536L396 551L396 533L397 548L398 556L398 556L399 549L400 547L400 545L401 540L402 538L402 529L403 532L404 522L404 529L405 521L406 511L406 507L407 502L408 502L408 493L409 490L410 487L410 494L411 495L412 491L412 473L413 475L414 477L414 467L415 459L416 464L416 467L417 459L417 453L418 453L419 445L419 439L420 460L421 436L421 455L422 432L423 455L423 436L424 443L425 435L425 445L426 438L427 449L427 435L428 446L429 442L429 445M455 490L456 473L456 481L457 470L458 476L458 463L459 500L460 469L460 484L461 475L462 478L462 484L463 472L464 487L464 471L465 484L466 471L466 481L467 469L468 487L468 488L469 487L470 481L470 484L471 487L472 480L472 477L473 476L474 473L474 484L475 475L476 475L476 478L477 491L478 480L478 479L479 483L480 489L480 477L481 496L482 459L482 482L483 477L484 489L484 488L485 488L486 484L486 492L487 485L488 489L488 496L489 477L490 478L490 496L491 480L492 484L492 494L493 495L494 482L494 487L495 489L495 472L496 491L497 483L497 492L498 487L499 487L499 495L500 496L501 506L501 498L502 472L503 485L503 471L504 483L505 500L505 486L506 486L507 476L507 493L508 486L509 499L509 493L510 489L511 489L511 495L512 479L513 497L513 494L514 495L515 488L515 496L516 492L517 490L517 487L518 497L519 485L519 486L520 490L521 484L521 495L522 489L523 492L523 488L524 480L525 497L525 493L526 497L527 488L527 491L528 500L529 488L529 486L530 486L531 478L531 467L532 483L532 486L533 492L534 491L534 488L535 487L536 485L536 495L537 475L538 503L538 481L539 485L540 487L540 492L541 487L542 496L542 481L543 496L544 491L544 488L545 489L546 485L546 477L547 478L548 468L548 493L549 488L550 492L550 484L551 456L552 480L552 471L553 466L554 478L554 500L555 471L556 469L556 472L557 477L558 483L558 474L559 482L560 470L560 475L561 487L562 471L562 489L563 492L564 477L564 479L565 482L566 477L566 483L567 484L568 489L568 489L569 491L570 497L570 483L571 487L571 489L572 487L573 500L573 499L574 497L575 501L575 499L576 521L577 502L577 511L578 514L579 520L579 519L580 522L581 510L581 518L582 510L583 508L583 505L584 499L585 485L585 504L586 497L587 482L587 491L588 502L589 481L589 491L590 456L591 481L591 482L592 476L593 477L593 464L594 480L595 481L595 469L596 457L597 468L597 468L598 461L599 459L599 471L600 475L601 474L601 468L602 462L603 466L603 465L604 472L605 455L605 460L606 468L607 448L607 458L608 466L608 464L609 458L610 453L610 471L611 465L612 486L612 454L613 469L614 475L614 476L615 460L616 458L616 463L617 467L618 459L618 455L619 464L620 470L620 466L621 468L622 473L622 455L623 473L624 464L624 439L625 463L626 475L626 459L627 464" fill="none" stroke="#000" stroke-width="1.7"/></g><g transform="translate(712,76) scale(0.17326) translate(-202,-200)"><use href="#pf" stroke="#505050" stroke-width="1.7"/><use href="#sgmain"/><path d="M284 468L285 461L285 472L286 472L286 474L287 476L287 485L288 473L288 459L289 471L290 483L290 480L291 476L291 479L292 467L292 480L293 487L293 476L294 483L295 481L295 475L296 477L296 475L297 477L297 488L298 464L298 475L299 479L300 481L300 468L301 479L301 481L302 495L302 494L303 489L303 486L304 485L305 491L305 501L306 489L306 487L307 506L307 511L308 513L308 512L309 530L309 531L310 553L311 556L311 556L312 542L312 556L313 555L313 556L314 546L314 540L315 544L316 555L316 544L317 546L317 531L318 517L318 513L319 514L319 511L320 509L321 517L321 536L322 515L322 540L323 524L323 487L324 518L324 504L325 515L326 502L326 502L327 494L327 500L328 502L328 496L329 481L329 484L330 481L331 471L331 468L332 478L332 474L333 475L333 471L334 462L334 475L335 469L336 465L336 471L337 463L337 467L338 464L338 470L339 451L339 454L340 460L341 468L341 461L342 453L342 461L343 456L343 461L344 454L344 467L345 461L346 459L346 460L347 472L347 467L348 472L348 463L349 470L349 471L350 461L350 470L351 486L352 471L352 478L353 469L353 481L354 487L354 472L355 475L355 481L356 474L357 494L357 496L358 489L358 503L359 483L359 483L360 509L360 498L361 490L362 500L362 496L363 497L363 503L364 503L364 495L365 497L365 501L366 506L367 507L367 498L368 501L368 510L369 504L369 520L370 508L370 517L371 515L372 517L372 514L373 516L373 539L374 525L374 525L375 517L375 524L376 518L377 530L377 531L378 532L378 538L379 522L379 526L380 516L380 537L381 525L382 533L382 521L383 528L383 505L384 530L384 522L385 535L385 535L386 539L387 527L387 533L388 528L388 533L389 525L389 528L390 551L390 541L391 530L391 538L392 531L393 545L393 526L394 526L394 496L395 531L395 542L396 534L396 535L397 522L398 536L398 535L399 533L399 524L400 545L400 541L401 520L401 520L402 525L403 553L403 542L404 542L404 536L405 543L405 543L406 539L406 522L407 535L408 526L408 540L409 535L409 531L410 536L410 536L411 527L411 534L412 529L413 536L413 538L414 536L414 519L415 539L415 530L416 526L416 538L417 530L418 521L418 530L419 543L419 535L420 530L420 527L421 534L421 542L422 528L423 532L423 536L424 540L424 527L425 528L425 539L426 540L426 525L427 533L428 543L428 533L429 546L429 551L430 527L430 529L431 533L431 532L432 548L433 523L433 535L434 538L434 528L435 547L435 531L436 528L436 529L437 539L437 537L438 526L439 536L439 534L440 535L440 535L441 530L441 531L442 539L442 529L443 516L444 525L444 519L445 531L445 521L446 521L446 518L447 511L447 508L448 513L449 522L449 527L450 523L450 528L451 525L451 523L452 521L452 527L453 516L454 512L454 516L455 508L455 522L456 503L456 512L457 515L457 509L458 513L459 510L459 501L460 496L460 512L461 504L461 493L462 498L462 503L463 505L464 497L464 508L465 506L465 512L466 505L466 516L467 500L467 507L468 497L469 516L469 511L470 508L470 511L471 506L471 504L472 502L472 495L473 513L474 517L474 503L475 514L475 511L476 517L476 511L477 514L477 519L478 504L478 514L479 512L480 515L480 516L481 513L481 521L482 515L482 517L483 517L483 510L484 525L485 516L485 519L486 521L486 519L487 521L487 512L488 525L488 528L489 503L490 510L490 517L491 531L491 534L492 517L492 516L493 521L493 534L494 526L495 531L495 534L496 520L496 522L497 514L497 520L498 530L498 514L499 527L500 501L500 497L501 501L501 526L502 517L502 518L503 513L503 521L504 514L505 509L505 478L506 531L506 530L507 514L507 505L508 505L508 514L509 507L510 508L510 514L511 514L511 501L512 517L512 513L513 507L513 505L514 527L515 503L515 523L516 508L516 511L517 499L517 496L518 501L518 508L519 506L520 495L520 505L521 499L521 500L522 508L522 502L523 481L523 495L524 510L524 490L525 487L526 494L526 485L527 488L527 500L528 477L528 494L529 468L529 482L530 473L531 474L531 490L532 480L532 475L533 474L533 477L534 478L534 463L535 474L536 460L536 464L537 475L537 471L538 481L538 468L539 460L539 463L540 467L541 457L541 480L542 469L542 454L543 467L543 471L544 465L544 463L545 471L546 488L546 473L547 466L547 469L548 481L548 478L549 473L549 480L550 471L551 472L551 456L552 482L552 486L553 480L553 485L554 482L554 481L555 477L556 486L556 484L557 484L557 482L558 487L558 495L559 483L559 492L560 511L561 493L561 511L562 518L562 531L563 522L563 541L564 541L564 553L565 556L565 556L566 556L567 556L567 556L568 555L568 535L569 556L569 546L570 552L570 555L571 556L572 552L572 556L573 556L573 556L574 556L574 552L575 538L575 542L576 547L577 545L577 524L578 518L578 519L579 507L579 510L580 502L580 504L581 494L582 494L582 499L583 514L583 485L584 484L584 476L585 489L585 483L586 486L587 482L587 472L588 474L588 478L589 477L589 467L590 486L590 486L591 495L592 489L592 474L593 479L593 477L594 474L594 483L595 458L595 469L596 474L597 463L597 453L598 471L598 460L599 452L599 462L600 461L600 455L601 452L602 458L602 464L603 462L603 453L604 463L604 453L605 460L605 454L606 457L606 441L607 452L608 455L608 451L609 461L609 448L610 446L610 462L611 454L611 458L612 454L613 459L613 451L614 468L614 455L615 444L615 457L616 461L616 451L617 463L618 459L618 467L619 460L619 461L620 460L620 465L621 466L621 469L622 461L623 462L623 449L624 458L624 451L625 452L625 450L626 466L626 462L627 451" fill="none" stroke="#000" stroke-width="1.75"/><path d="M315.5 424.5V557M567.5 424.5V557M573.5 459V557" stroke="#000" stroke-width="1.6"/></g><g transform="translate(812,76) scale(0.17326) translate(-202,-200)"><use href="#pf" stroke="#505050" stroke-width="1.7"/><use href="#sgbase"/><polyline points="284,289 311,314 346,342 387,317 421,282 449,251" fill="none" stroke="#88f81c" stroke-width="4" opacity="0.85" stroke-linejoin="round"/><polyline points="490,251 524,276 558,295 593,308 627,314" fill="none" stroke="#88f81c" stroke-width="4" opacity="0.85" stroke-linejoin="round"/><path d="M497 314 L483 377 L510 377 Z" fill="#a0f818" opacity=".6"/><rect x="493" y="327" width="8" height="50" fill="#d8fc00" opacity="0.7"/><rect x="486" y="334" width="21" height="10" fill="#ffe000" opacity="0.9"/><rect x="492" y="337" width="10" height="5" fill="#ff9000" opacity="0.8"/><rect x="462" y="339" width="14" height="38" fill="#90f820" opacity="0.5"/><rect x="582" y="301" width="7" height="25" fill="#90f820" opacity="0.6"/></g><g transform="translate(912,76) scale(0.17326) translate(-202,-200)"><use href="#pf" stroke="#505050" stroke-width="1.7"/><use href="#sgbase"/><polyline points="284,289 318,301 387,327" fill="none" stroke="#88f81c" stroke-width="3" opacity="0.7" stroke-linejoin="round"/><rect x="284" y="289" width="10" height="13" fill="#e0fc00" opacity="0.6"/></g></svg>
<div class="a" style="left:15px;top:692px;width:835px;height:26px;border:1px solid #7a8a99;background:#fff;"></div>
<span class="t" style="left:17.40px;top:695.50px;font-size:13px;color:#282828;font-weight:bold;-webkit-text-stroke:0.12px #282828;letter-spacing:0.840px;">file:/home/jbf/tmp/pngwalk3/product_$Y$m$d_$(H,delta=12).png</span>
<div class="a" style="left:851px;top:692px;width:20px;height:27px;border:1px solid #7a8a99;background:linear-gradient(#dde8f3 0%,#ffffff 30%,#dde8f3 60%,#b8cfe5 100%);"></div>
<div class="a" style="left:852px;top:693px;width:18px;height:1px;background:#fff;opacity:.55;"></div>
<div class="a" style="left:852px;top:693px;width:1px;height:25px;background:#fff;opacity:.6;"></div>
<div class="a" style="left:877px;top:692px;width:26px;height:27px;border:1px solid #7a8a99;background:linear-gradient(#dde8f3 0%,#ffffff 30%,#dde8f3 60%,#b8cfe5 100%);"></div>
<div class="a" style="left:878px;top:693px;width:24px;height:1px;background:#fff;opacity:.55;"></div>
<div class="a" style="left:878px;top:693px;width:1px;height:25px;background:#fff;opacity:.6;"></div>
<div class="a" style="left:909px;top:692px;width:26px;height:27px;border:1px solid #7a8a99;background:linear-gradient(#dde8f3 0%,#ffffff 30%,#dde8f3 60%,#b8cfe5 100%);"></div>
<div class="a" style="left:910px;top:693px;width:24px;height:1px;background:#fff;opacity:.55;"></div>
<div class="a" style="left:910px;top:693px;width:1px;height:25px;background:#fff;opacity:.6;"></div>
<svg style="left:0;top:690px" width="938" height="32" viewBox="0 690 938 32">
<defs><linearGradient id="pg" x1="0" y1="0" x2="1" y2="0"><stop offset="0" stop-color="#5cb870"/><stop offset="1" stop-color="#2c9c48"/></linearGradient>
<linearGradient id="fg" x1="0" y1="0" x2="0" y2="1"><stop offset="0" stop-color="#fffbd4"/><stop offset="1" stop-color="#ffe070"/></linearGradient>
<radialGradient id="mg" cx=".4" cy=".35" r=".7"><stop offset="0" stop-color="#d4e8fc"/><stop offset="1" stop-color="#9cc8f4"/></radialGradient></defs>
<path d="M855.8 703 L866.2 703 L861 708.4 Z" fill="#222"/>
<path d="M885.6 699.4 L895.6 705 L885.6 710.6 Z" fill="url(#pg)" stroke="#1f8a3a" stroke-width="1.3" stroke-linejoin="round"/>
<path d="M886.6 701.2 L892.5 704.6 L886.6 706.5 Z" fill="#c8ecc8" opacity=".55"/>
<path d="M914.5 711.2 V701.4 Q914.5 700.5 915.4 700.5 H919.6 L920.6 702.2 H927.4 V704.6" fill="#f6dd80" stroke="#d4a610" stroke-width="1"/>
<path d="M914.6 711.4 L915.6 704.5 H928.4 L927.3 711.4 Z" fill="url(#fg)" stroke="#d4a610" stroke-width="1" stroke-linejoin="round"/>
<path d="M922.3 706 L918.6 709.2" stroke="#f08a18" stroke-width="2.1" stroke-linecap="round"/>
<path d="M922.3 706 L918.6 709.2" stroke="#ffd040" stroke-width="2.1" stroke-dasharray=".7 .9"/>
<circle cx="925.4" cy="702" r="3.7" fill="url(#mg)" stroke="#d8d4dc" stroke-width="1"/>
</svg>
<div class="a" style="left:49px;top:731px;width:13px;height:13px;border:1px solid #7a8a99;background:linear-gradient(#ffffff 0%,#f4f8fc 30%,#dde8f3 60%,#b8cfe5 100%);"></div>
<div class="a" style="left:50px;top:732px;width:11px;height:1px;background:#fff;"></div>
<span class="t" style="left:66.50px;top:727.50px;font-size:13px;color:#282828;font-weight:bold;-webkit-text-stroke:0.12px #282828;letter-spacing:0.795px;">Limit range to:</span>
<div class="a" style="left:176px;top:728px;width:236px;height:19px;border:1px solid #b8cfe5;background:#fff;"></div>
<div class="a" style="left:424px;top:725px;width:93px;height:25px;border:1px solid #9c9c9c;background:#eeeeee;"></div>
<span class="t" style="left:440.50px;top:727.50px;font-size:13px;color:#999;font-weight:bold;-webkit-text-stroke:0.12px #999;letter-spacing:1.040px;">Select...</span>
<div class="a" style="left:539px;top:731px;width:13px;height:13px;border:1px solid #7a8a99;background:linear-gradient(#ffffff 0%,#f4f8fc 30%,#dde8f3 60%,#b8cfe5 100%);"></div>
<div class="a" style="left:540px;top:732px;width:11px;height:1px;background:#fff;"></div>
<span class="t" style="left:556.40px;top:727.50px;font-size:13px;color:#282828;font-weight:bold;-webkit-text-stroke:0.12px #282828;letter-spacing:0.827px;">Show Missing</span>
<div class="a" style="left:780px;top:730px;width:150px;height:25px;border:1px solid #7a8a99;background:linear-gradient(#dde8f3 0%,#ffffff 30%,#dde8f3 60%,#b8cfe5 100%);"></div>
<div class="a" style="left:781px;top:731px;width:148px;height:1px;background:#fff;opacity:.55;"></div>
<div class="a" style="left:781px;top:731px;width:1px;height:23px;background:#fff;opacity:.6;"></div>
<span class="t" style="left:797.00px;top:732.50px;font-size:13px;color:#282828;font-weight:bold;-webkit-text-stroke:0.12px #282828;letter-spacing:0.868px;">View in Autoplot</span>
<div class="a" style="left:139px;top:756px;width:58px;height:22px;border:1px solid #7a8a99;background:linear-gradient(#dde8f3 0%,#ffffff 30%,#dde8f3 60%,#b8cfe5 100%);"></div>
<div class="a" style="left:140px;top:757px;width:56px;height:1px;background:#fff;opacity:.55;"></div>
<div class="a" style="left:140px;top:757px;width:1px;height:20px;background:#fff;opacity:.6;"></div>
<div class="a" style="left:203px;top:756px;width:58px;height:22px;border:1px solid #7a8a99;background:linear-gradient(#dde8f3 0%,#ffffff 30%,#dde8f3 60%,#b8cfe5 100%);"></div>
<div class="a" style="left:204px;top:757px;width:56px;height:1px;background:#fff;opacity:.55;"></div>
<div class="a" style="left:204px;top:757px;width:1px;height:20px;background:#fff;opacity:.6;"></div>
<div class="a" style="left:267px;top:756px;width:50px;height:22px;border:1px solid #7a8a99;background:linear-gradient(#dde8f3 0%,#ffffff 30%,#dde8f3 60%,#b8cfe5 100%);"></div>
<div class="a" style="left:268px;top:757px;width:48px;height:1px;background:#fff;opacity:.55;"></div>
<div class="a" style="left:268px;top:757px;width:1px;height:20px;background:#fff;opacity:.6;"></div>
<div class="a" style="left:356px;top:756px;width:50px;height:22px;border:1px solid #7a8a99;background:linear-gradient(#dde8f3 0%,#ffffff 30%,#dde8f3 60%,#b8cfe5 100%);"></div>
<div class="a" style="left:357px;top:757px;width:48px;height:1px;background:#fff;opacity:.55;"></div>
<div class="a" style="left:357px;top:757px;width:1px;height:20px;background:#fff;opacity:.6;"></div>
<div class="a" style="left:412px;top:756px;width:58px;height:22px;border:1px solid #7a8a99;background:linear-gradient(#dde8f3 0%,#ffffff 30%,#dde8f3 60%,#b8cfe5 100%);"></div>
<div class="a" style="left:413px;top:757px;width:56px;height:1px;background:#fff;opacity:.55;"></div>
<div class="a" style="left:413px;top:757px;width:1px;height:20px;background:#fff;opacity:.6;"></div>
<div class="a" style="left:476px;top:756px;width:58px;height:22px;border:1px solid #7a8a99;background:linear-gradient(#dde8f3 0%,#ffffff 30%,#dde8f3 60%,#b8cfe5 100%);"></div>
<div class="a" style="left:477px;top:757px;width:56px;height:1px;background:#fff;opacity:.55;"></div>
<div class="a" style="left:477px;top:757px;width:1px;height:20px;background:#fff;opacity:.6;"></div>
<svg style="left:0;top:756px" width="938" height="24" viewBox="0 756 938 24"><defs><linearGradient id="tl" x1="0" y1="0" x2="1" y2="0"><stop offset="0" stop-color="#2038c8"/><stop offset="1" stop-color="#9cb4f0"/></linearGradient><linearGradient id="tr" x1="0" y1="0" x2="1" y2="0"><stop offset="0" stop-color="#9cb4f0"/><stop offset="1" stop-color="#2038c8"/></linearGradient></defs><g fill="url(#tl)" stroke="#1c2cc0" stroke-width=".9" stroke-linejoin="round"><path d="M165.5 761 L165.5 773 L158.5 767 Z"/><path d="M172 761 L172 773 L165 767 Z"/><path d="M178.5 761 L178.5 773 L171.5 767 Z"/><path d="M228.5 761 L228.5 773 L221.5 767 Z"/><path d="M235 761 L235 773 L228 767 Z"/><path d="M241.5 761 L241.5 773 L234.5 767 Z"/><path d="M292.5 761 L292.5 773 L285.5 767 Z"/><path d="M299 761 L299 773 L292 767 Z"/></g><g fill="url(#tr)" stroke="#1c2cc0" stroke-width=".9" stroke-linejoin="round"><path d="M374.5 761 L374.5 773 L381.5 767 Z"/><path d="M381 761 L381 773 L388 767 Z"/><path d="M430.5 761 L430.5 773 L437.5 767 Z"/><path d="M437 761 L437 773 L444 767 Z"/><path d="M443.5 761 L443.5 773 L450.5 767 Z"/><path d="M494 761 L494 773 L501 767 Z"/><path d="M500.5 761 L500.5 773 L507.5 767 Z"/><path d="M507 761 L507 773 L514 767 Z"/></g><g fill="#1c2cc0"><rect x="156" y="761" width="2" height="12.4"/><rect x="514.6" y="761" width="2" height="12.4"/></g></svg>
<span class="t" style="left:35.70px;top:786.50px;font-size:13px;color:#282828;font-weight:bold;-webkit-text-stroke:0.12px #282828;letter-spacing:0.813px;">8 of 62 images loaded.</span>
</body></html>
